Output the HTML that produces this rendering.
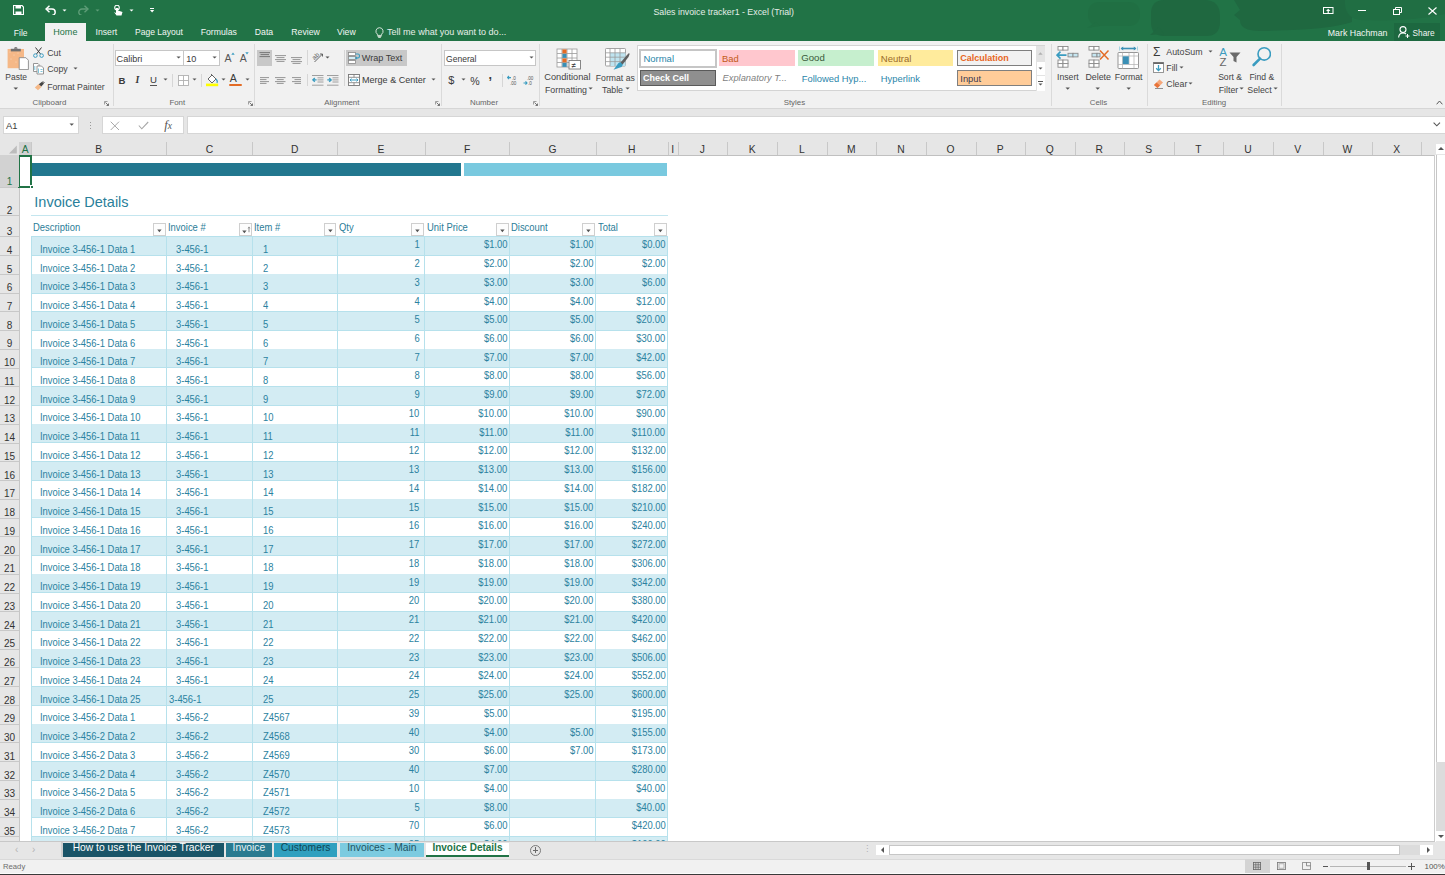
<!DOCTYPE html><html><head><meta charset="utf-8"><style>
*{margin:0;padding:0;box-sizing:border-box}
html,body{width:1445px;height:875px;overflow:hidden;background:#fff;font-family:"Liberation Sans",sans-serif}
.abs{position:absolute}
.t{position:absolute;white-space:nowrap;line-height:1}

</style></head><body>
<div class="abs" style="left:0;top:0;width:1445px;height:41px;background:#217346"></div>
<div class="abs" style="left:0;top:41px;width:1445px;height:67px;background:#f1f1f1"></div>
<div class="abs" style="left:0;top:108px;width:1445px;height:1px;background:#d6d6d6"></div>
<svg class="abs" style="left:1060px;top:0px" width="385" height="41" viewBox="0 0 385 41"><g fill="#1f6b41"><path d="M40 2 H68 Q80 2 80 14 Q80 26 68 26 H40 Q28 26 28 14 Q28 2 40 2Z" fill="#206f43"/><path d="M27 28 L36 22 L40 26Z" fill="#206f43"/><path d="M104 0 H144 Q160 0 160 16 V22 Q160 36 146 36 H104 Q91 36 91 22 V14 Q91 0 104 0Z" fill="#1f6840"/><path d="M90 35 L99 27 L104 34Z" fill="#1f6840"/><path d="M174 0 H292 V22 Q270 30 200 31 Q180 31 180 20 L174 15 L180 10Z" fill="#1f6840"/><path d="M285 0 H385 V14 Q350 22 300 20 Q284 18 285 0Z" fill="#206e43"/></g></svg>
<svg class="abs" style="left:13px;top:5px" width="11" height="10" viewBox="0 0 11 10"><path d="M0.5 0.5 H9 L10.5 2 V9.5 H0.5Z" fill="none" stroke="#fff" stroke-width="1.2"/><rect x="2.5" y="0.5" width="5.5" height="3" fill="#fff"/><rect x="2.5" y="6.5" width="6" height="3" fill="#fff"/></svg>
<svg class="abs" style="left:45px;top:5px" width="12" height="10" viewBox="0 0 12 10"><path d="M2 4 H7 A3.2 3.2 0 0 1 7 10.4" fill="none" stroke="#fff" stroke-width="1.5"/><path d="M4.5 0.8 L1 4 L4.5 7.2" fill="none" stroke="#fff" stroke-width="1.5"/></svg>
<svg class="abs" style="left:61.50px;top:8.50px" width="5.0" height="3.0"><path d="M0.5 0.5 H4.50 L2.50 2.50Z" fill="#fff"/></svg>
<svg class="abs" style="left:78px;top:5px" width="11" height="10" viewBox="0 0 11 10"><path d="M9 4 H4 A3.2 3.2 0 0 0 4 10.4" fill="none" stroke="#5f9d78" stroke-width="1.4"/><path d="M6.5 0.8 L10 4 L6.5 7.2" fill="none" stroke="#5f9d78" stroke-width="1.4"/></svg>
<svg class="abs" style="left:95.00px;top:8.50px" width="5.0" height="3.0"><path d="M0.5 0.5 H4.50 L2.50 2.50Z" fill="#5f9d78"/></svg>
<svg class="abs" style="left:113px;top:5px" width="10" height="11" viewBox="0 0 10 11"><circle cx="4" cy="2.6" r="2.3" fill="none" stroke="#fff" stroke-width="1.1"/><path d="M3 3 V8 L1 7 L3.5 10.5 H8.5 L9.5 7 L5 5.5 V3Z" fill="#fff"/></svg>
<svg class="abs" style="left:128.50px;top:8.50px" width="5.0" height="3.0"><path d="M0.5 0.5 H4.50 L2.50 2.50Z" fill="#fff"/></svg>
<div class="abs" style="left:150.40px;top:8.20px;width:3.80px;height:0.90px;background:#fff;"></div>
<svg class="abs" style="left:150.2px;top:10px" width="4.4" height="3" viewBox="0 0 4.4 3"><path d="M0 0 H4.2 L2.1 2.4Z" fill="#fff"/></svg>
<div class="t" style="left:653.5px;top:7.55px;font-size:8.8px;color:#e5eee8;">Sales invoice tracker1 - Excel (Trial)</div>
<svg class="abs" style="left:1323px;top:7px" width="11" height="7" viewBox="0 0 11 7"><rect x="0.5" y="0.5" width="9.5" height="6" fill="none" stroke="#fff" stroke-width="1"/><path d="M3 4 L5.2 1.8 L7.4 4Z M4.6 3.5 H5.8 V6 H4.6Z" fill="#fff"/></svg>
<div class="abs" style="left:1358.40px;top:10.00px;width:8.00px;height:1.00px;background:#fff;"></div>
<svg class="abs" style="left:1393px;top:7px" width="9" height="8" viewBox="0 0 9 8"><rect x="0.5" y="2.5" width="6" height="5" fill="none" stroke="#fff" stroke-width="1"/><path d="M2.5 2.5 V0.5 H8.5 V5.5 H6.5" fill="none" stroke="#fff" stroke-width="1"/></svg>
<svg class="abs" style="left:1427.5px;top:6.5px" width="9" height="8" viewBox="0 0 9 8"><path d="M0.5 0.5 L8.5 7.5 M8.5 0.5 L0.5 7.5" stroke="#fff" stroke-width="1.1"/></svg>
<div class="abs" style="left:45.00px;top:23.30px;width:41.10px;height:18.00px;background:#f1f1f1;"></div>
<div class="t" style="left:13.8px;top:28.50px;font-size:8.5px;color:#f3f6f4;">File</div>
<div class="t" style="left:53.3px;top:28.04px;font-size:9.05px;color:#217346;">Home</div>
<div class="t" style="left:95.5px;top:28.34px;font-size:8.7px;color:#f3f6f4;">Insert</div>
<div class="t" style="left:135.0px;top:28.46px;font-size:8.55px;color:#f3f6f4;">Page Layout</div>
<div class="t" style="left:200.7px;top:28.34px;font-size:8.7px;color:#f3f6f4;">Formulas</div>
<div class="t" style="left:254.8px;top:28.34px;font-size:8.7px;color:#f3f6f4;">Data</div>
<div class="t" style="left:291.3px;top:28.34px;font-size:8.7px;color:#f3f6f4;">Review</div>
<div class="t" style="left:337.0px;top:28.34px;font-size:8.7px;color:#f3f6f4;">View</div>
<svg class="abs" style="left:374.5px;top:27px" width="9" height="11" viewBox="0 0 9 11"><path d="M4.5 0.7 A3.6 3.6 0 0 1 6.6 7.2 V8.4 H2.4 V7.2 A3.6 3.6 0 0 1 4.5 0.7Z" fill="none" stroke="#e8efe9" stroke-width="0.9"/><path d="M2.6 9.5 H6.4 M3.2 10.5 H5.8" stroke="#e8efe9" stroke-width="0.8"/></svg>
<div class="t" style="left:387.0px;top:28.04px;font-size:9.05px;color:#e8efe9;">Tell me what you want to do...</div>
<div class="t" style="left:1327.8px;top:28.55px;font-size:8.8px;color:#f3f6f4;">Mark Hachman</div>
<div class="abs" style="left:1394.40px;top:23.40px;width:45.30px;height:17.60px;background:#1d6840;"></div>
<svg class="abs" style="left:1398px;top:26px" width="12" height="12" viewBox="0 0 12 12"><circle cx="5" cy="3.6" r="3" fill="none" stroke="#fff" stroke-width="1.1"/><path d="M0.6 11.5 Q1 7 5 7 Q7 7 8 8" fill="none" stroke="#fff" stroke-width="1.1"/><path d="M9.5 8 V12 M7.5 10 H11.5" stroke="#fff" stroke-width="1"/></svg>
<div class="t" style="left:1412.5px;top:28.97px;font-size:8.3px;color:#f3f6f4;">Share</div>
<div class="abs" style="left:112.80px;top:44.40px;width:1.00px;height:62.00px;background:#dadada;"></div>
<div class="abs" style="left:253.80px;top:44.40px;width:1.00px;height:62.00px;background:#dadada;"></div>
<div class="abs" style="left:441.40px;top:44.40px;width:1.00px;height:62.00px;background:#dadada;"></div>
<div class="abs" style="left:538.50px;top:44.40px;width:1.00px;height:62.00px;background:#dadada;"></div>
<div class="abs" style="left:1050.80px;top:44.40px;width:1.00px;height:62.00px;background:#dadada;"></div>
<div class="abs" style="left:1147.40px;top:44.40px;width:1.00px;height:62.00px;background:#dadada;"></div>
<div class="abs" style="left:1281.40px;top:44.40px;width:1.00px;height:62.00px;background:#dadada;"></div>
<div class="abs" style="left:172.30px;top:73.70px;width:1.00px;height:13.00px;background:#d6d6d6;"></div>
<div class="abs" style="left:201.40px;top:73.70px;width:1.00px;height:13.00px;background:#d6d6d6;"></div>
<div class="abs" style="left:306.50px;top:50.00px;width:1.00px;height:15.00px;background:#d6d6d6;"></div>
<div class="abs" style="left:306.50px;top:74.00px;width:1.00px;height:12.00px;background:#d6d6d6;"></div>
<div class="abs" style="left:343.60px;top:50.00px;width:1.00px;height:36.00px;background:#d6d6d6;"></div>
<div class="abs" style="left:501.70px;top:73.70px;width:1.00px;height:13.00px;background:#d6d6d6;"></div>
<div class="t" style="left:-50.6px;width:200px;text-align:center;top:98.91px;font-size:7.9px;color:#666;">Clipboard</div>
<div class="t" style="left:77.3px;width:200px;text-align:center;top:98.91px;font-size:7.9px;color:#666;">Font</div>
<div class="t" style="left:241.9px;width:200px;text-align:center;top:98.91px;font-size:7.9px;color:#666;">Alignment</div>
<div class="t" style="left:384.0px;width:200px;text-align:center;top:98.91px;font-size:7.9px;color:#666;">Number</div>
<div class="t" style="left:694.4px;width:200px;text-align:center;top:98.91px;font-size:7.9px;color:#666;">Styles</div>
<div class="t" style="left:998.5px;width:200px;text-align:center;top:98.91px;font-size:7.9px;color:#666;">Cells</div>
<div class="t" style="left:1114.2px;width:200px;text-align:center;top:98.91px;font-size:7.9px;color:#666;">Editing</div>
<svg class="abs" style="left:104.2px;top:100.6px" width="5" height="5" viewBox="0 0 5 5"><path d="M0.5 3.5 V0.5 H3.5" fill="none" stroke="#8a8a8a" stroke-width="0.8"/><path d="M1.5 1.5 L4.5 4.5 M4.5 2.5 V4.5 H2.5" fill="none" stroke="#666" stroke-width="0.9"/></svg>
<svg class="abs" style="left:248px;top:100.6px" width="5" height="5" viewBox="0 0 5 5"><path d="M0.5 3.5 V0.5 H3.5" fill="none" stroke="#8a8a8a" stroke-width="0.8"/><path d="M1.5 1.5 L4.5 4.5 M4.5 2.5 V4.5 H2.5" fill="none" stroke="#666" stroke-width="0.9"/></svg>
<svg class="abs" style="left:434.7px;top:100.6px" width="5" height="5" viewBox="0 0 5 5"><path d="M0.5 3.5 V0.5 H3.5" fill="none" stroke="#8a8a8a" stroke-width="0.8"/><path d="M1.5 1.5 L4.5 4.5 M4.5 2.5 V4.5 H2.5" fill="none" stroke="#666" stroke-width="0.9"/></svg>
<svg class="abs" style="left:532.6px;top:100.6px" width="5" height="5" viewBox="0 0 5 5"><path d="M0.5 3.5 V0.5 H3.5" fill="none" stroke="#8a8a8a" stroke-width="0.8"/><path d="M1.5 1.5 L4.5 4.5 M4.5 2.5 V4.5 H2.5" fill="none" stroke="#666" stroke-width="0.9"/></svg>
<svg class="abs" style="left:1436px;top:100px" width="7" height="5" viewBox="0 0 7 5"><path d="M0.6 4.3 L3.5 1 L6.4 4.3" fill="none" stroke="#555" stroke-width="1"/></svg>
<svg class="abs" style="left:7px;top:45.5px" width="22" height="24" viewBox="0 0 22 24"><rect x="0.6" y="3" width="16.4" height="19.2" fill="#f5b887"/><g fill="#fbe0c8"><circle cx="3" cy="6" r="0.5"/><circle cx="7" cy="9" r="0.5"/><circle cx="11" cy="7" r="0.5"/><circle cx="4" cy="13" r="0.5"/><circle cx="9" cy="16" r="0.5"/><circle cx="13" cy="12" r="0.5"/></g><path d="M3.8 2.8 H13.8 V5.4 H3.8Z" fill="#707070"/><path d="M7 2.8 A1.8 1.8 0 0 1 10.6 2.8" fill="#707070"/><path d="M12.2 11.7 H18.9 L21.4 14.2 V23.6 H12.2Z" fill="#fff" stroke="#8a8a8a" stroke-width="0.9"/></svg>
<div class="t" style="left:-83.8px;width:200px;text-align:center;top:73.00px;font-size:8.5px;color:#444;">Paste</div>
<svg class="abs" style="left:13.20px;top:86.65px" width="5.6" height="3.3"><path d="M0.5 0.5 H5.10 L2.80 2.80Z" fill="#555"/></svg>
<svg class="abs" style="left:33px;top:46.5px" width="11" height="11" viewBox="0 0 11 11"><path d="M2.5 0.5 L7.5 7 M8.5 0.5 L3.5 7" stroke="#3a3a3a" stroke-width="1"/><circle cx="2.4" cy="8.6" r="1.8" fill="none" stroke="#3a9cc0" stroke-width="1"/><circle cx="8.6" cy="8.6" r="1.8" fill="none" stroke="#3a9cc0" stroke-width="1"/></svg>
<div class="t" style="left:47.2px;top:49.15px;font-size:8.8px;color:#444;">Cut</div>
<svg class="abs" style="left:33px;top:63px" width="11" height="11.5" viewBox="0 0 11 11.5"><path d="M0.5 0.5 H5 L6 1.5 V8.5 H0.5Z" fill="#fff" stroke="#8a8a8a" stroke-width="0.9"/><path d="M4 3 H8.5 L10.5 5 V11 H4Z" fill="#fff" stroke="#8a8a8a" stroke-width="0.9"/><path d="M1.8 3 V7 M5.5 5.5 V10 M7.5 6.5 H9.5 M7.5 8.5 H9.5" stroke="#6fbfd8" stroke-width="0.9"/></svg>
<div class="t" style="left:47.2px;top:64.55px;font-size:8.8px;color:#444;">Copy</div>
<svg class="abs" style="left:73.10px;top:66.90px" width="5.0" height="3.0"><path d="M0.5 0.5 H4.50 L2.50 2.50Z" fill="#555"/></svg>
<svg class="abs" style="left:34px;top:81px" width="11" height="10" viewBox="0 0 11 10"><path d="M0.8 6.5 L4.5 3 L7.5 6 L4 9.3Z" fill="#f5b887"/><path d="M4.8 3.3 L8 0.8 L10 2.5 L7.3 5.6Z" fill="#444"/><path d="M8.8 0.3 L10.5 2" stroke="#444" stroke-width="1"/></svg>
<div class="t" style="left:47.2px;top:82.84px;font-size:8.7px;color:#444;">Format Painter</div>
<div class="abs" style="left:115.00px;top:50.40px;width:68.50px;height:16.10px;background:#fff;border:1px solid #c6c6c6"></div>
<div class="abs" style="left:183.50px;top:50.40px;width:36.00px;height:16.10px;background:#fff;border:1px solid #c6c6c6;border-left:none"></div>
<div class="t" style="left:116.6px;top:55.00px;font-size:9.1px;color:#3a3a3a;">Calibri</div>
<svg class="abs" style="left:175.90px;top:56.45px" width="5.2" height="3.1"><path d="M0.5 0.5 H4.70 L2.60 2.60Z" fill="#555"/></svg>
<div class="t" style="left:186.3px;top:55.00px;font-size:9.1px;color:#3a3a3a;">10</div>
<svg class="abs" style="left:212.20px;top:56.45px" width="5.2" height="3.1"><path d="M0.5 0.5 H4.70 L2.60 2.60Z" fill="#555"/></svg>
<div class="t" style="left:224.6px;top:53.11px;font-size:10.5px;color:#555;">A</div>
<svg class="abs" style="left:230.5px;top:51.5px" width="4" height="3" viewBox="0 0 4 3"><path d="M0.3 2.7 L2 0.5 L3.7 2.7Z" fill="#3a9cc0"/></svg>
<div class="t" style="left:239.8px;top:53.11px;font-size:10.5px;color:#555;">A</div>
<svg class="abs" style="left:245.2px;top:51.5px" width="4" height="3" viewBox="0 0 4 3"><path d="M0.3 0.3 L2 2.5 L3.7 0.3Z" fill="#3a9cc0"/></svg>
<div class="t" style="left:118.6px;top:75.57px;font-size:9.6px;color:#3a3a3a;font-weight:bold">B</div>
<div class="t" style="left:135.6px;top:75.40px;font-size:9.8px;color:#3a3a3a;font-family:'Liberation Serif',serif;font-style:italic;font-weight:bold">I</div>
<div class="t" style="left:150.0px;top:75.37px;font-size:9.6px;color:#3a3a3a;">U</div>
<div class="abs" style="left:150.00px;top:85.00px;width:7.20px;height:0.90px;background:#555;"></div>
<svg class="abs" style="left:163.00px;top:78.10px" width="5.0" height="3.0"><path d="M0.5 0.5 H4.50 L2.50 2.50Z" fill="#555"/></svg>
<svg class="abs" style="left:177.5px;top:74.8px" width="11" height="11" viewBox="0 0 11 11"><rect x="0.5" y="0.5" width="10" height="10" fill="#fff" stroke="#b0b0b0" stroke-width="0.9"/><path d="M5.5 0.5 V10.5 M0.5 5.5 H10.5" stroke="#b0b0b0" stroke-width="0.9"/></svg>
<svg class="abs" style="left:192.10px;top:78.10px" width="5.0" height="3.0"><path d="M0.5 0.5 H4.50 L2.50 2.50Z" fill="#555"/></svg>
<svg class="abs" style="left:206px;top:73px" width="13" height="14" viewBox="0 0 13 14"><path d="M2 6 L6 2 L10 6 L6 10Z" fill="#fff" stroke="#555" stroke-width="0.9"/><path d="M5 1 L6.5 2.5" stroke="#555" stroke-width="0.9"/><path d="M10 6 Q12 8 11 10" fill="none" stroke="#3a9cc0" stroke-width="1.2"/><rect x="0" y="10.6" width="12.2" height="2.6" fill="#ffff00"/></svg>
<svg class="abs" style="left:221.20px;top:78.10px" width="5.0" height="3.0"><path d="M0.5 0.5 H4.50 L2.50 2.50Z" fill="#555"/></svg>
<div class="t" style="left:229.8px;top:73.43px;font-size:10.6px;color:#3a3a3a;">A</div>
<div class="abs" style="left:229.40px;top:83.60px;width:12.40px;height:2.70px;background:#e36c26;border-radius:1px"></div>
<svg class="abs" style="left:244.50px;top:78.10px" width="5.0" height="3.0"><path d="M0.5 0.5 H4.50 L2.50 2.50Z" fill="#555"/></svg>
<div class="abs" style="left:256.80px;top:49.90px;width:15.60px;height:16.10px;background:#c8c8c8;"></div>
<svg class="abs" style="left:259px;top:52px" width="12" height="6" viewBox="0 0 12 6"><path d="M0.5 0.6 H11 M1.5 2.6 H10 M0.5 4.6 H11" stroke="#6d6d6d" stroke-width="0.9"/></svg>
<svg class="abs" style="left:275px;top:54.5px" width="11" height="7" viewBox="0 0 11 7"><path d="M0 0.6 H11 M1.5 2.6 H9.5 M0 4.6 H11 M1.5 6.4 H9.5" stroke="#8a8a8a" stroke-width="0.9"/></svg>
<svg class="abs" style="left:290.5px;top:57px" width="11" height="7" viewBox="0 0 11 7"><path d="M0 0.6 H11 M1.5 2.6 H9.5 M0 4.6 H11 M1.5 6.4 H9.5" stroke="#8a8a8a" stroke-width="0.9"/></svg>
<svg class="abs" style="left:311px;top:49.5px" width="13" height="13" viewBox="0 0 13 13"><text x="1" y="8" font-size="6.5" fill="#555" font-family="Liberation Sans" transform="rotate(-45 5 6)">ab</text><path d="M3.5 12 L11.5 4 M9 4 H11.5 V6.5" fill="none" stroke="#555" stroke-width="0.9"/></svg>
<svg class="abs" style="left:325.10px;top:56.00px" width="5.0" height="3.0"><path d="M0.5 0.5 H4.50 L2.50 2.50Z" fill="#555"/></svg>
<div class="abs" style="left:346.00px;top:49.90px;width:60.50px;height:16.10px;background:#c8c8c8;"></div>
<svg class="abs" style="left:348.4px;top:51.5px" width="12" height="12" viewBox="0 0 12 12"><rect x="0.5" y="0.5" width="7" height="3" fill="#fff" stroke="#8a8a8a" stroke-width="0.8"/><rect x="0.5" y="4.5" width="7" height="3" fill="#d5eef6" stroke="#8a8a8a" stroke-width="0.8"/><rect x="0.5" y="8.5" width="7" height="3" fill="#fff" stroke="#8a8a8a" stroke-width="0.8"/><path d="M7.5 2 H10 Q11.5 2 11.5 4 Q11.5 6 10 6 H8 M9 4.8 L7.8 6 L9 7.2" fill="none" stroke="#3a9cc0" stroke-width="1.1"/></svg>
<div class="t" style="left:361.8px;top:54.00px;font-size:9.1px;color:#3a3a3a;">Wrap Text</div>
<svg class="abs" style="left:260px;top:76.8px" width="10" height="7" viewBox="0 0 10 7"><path d="M0 0.6 H9 M0 2.6 H6.5 M0 4.6 H9 M0 6.4 H6.5" stroke="#8a8a8a" stroke-width="0.9"/></svg>
<svg class="abs" style="left:275.3px;top:76.8px" width="11" height="7" viewBox="0 0 11 7"><path d="M0 0.6 H10.5 M1.8 2.6 H8.7 M0 4.6 H10.5 M1.8 6.4 H8.7" stroke="#8a8a8a" stroke-width="0.9"/></svg>
<svg class="abs" style="left:291.5px;top:76.8px" width="10" height="7" viewBox="0 0 10 7"><path d="M0 0.6 H9 M2.5 2.6 H9 M0 4.6 H9 M2.5 6.4 H9" stroke="#8a8a8a" stroke-width="0.9"/></svg>
<svg class="abs" style="left:311.5px;top:74.8px" width="12" height="11" viewBox="0 0 12 11"><path d="M0 0.5 H11.5 M5.5 2.8 H11.5 M5.5 4.9 H11.5 M5.5 7 H11.5 M0 10.2 H11.5" stroke="#8a8a8a" stroke-width="0.8"/><path d="M0.8 4.9 H4.6 M2.8 3 L0.8 4.9 L2.8 6.8" fill="none" stroke="#3a9cc0" stroke-width="1.3"/></svg>
<svg class="abs" style="left:327.3px;top:74.8px" width="12" height="11" viewBox="0 0 12 11"><path d="M0 0.5 H11.5 M5.5 2.8 H11.5 M5.5 4.9 H11.5 M5.5 7 H11.5 M0 10.2 H11.5" stroke="#8a8a8a" stroke-width="0.8"/><path d="M0.3 4.9 H4.2 M2.2 3 L4.2 4.9 L2.2 6.8" fill="none" stroke="#3a9cc0" stroke-width="1.3"/></svg>
<svg class="abs" style="left:348px;top:74px" width="12" height="12" viewBox="0 0 12 12"><rect x="0.5" y="0.5" width="11" height="11" fill="#fff" stroke="#777" stroke-width="0.9"/><path d="M0.5 3.3 H11.5 M0.5 8.7 H11.5 M6 0.5 V3.3 M6 8.7 V11.5" stroke="#777" stroke-width="0.8"/><path d="M2 6 H10 M3.5 4.6 L2 6 L3.5 7.4 M8.5 4.6 L10 6 L8.5 7.4" fill="none" stroke="#3a9cc0" stroke-width="1"/></svg>
<div class="t" style="left:362.0px;top:76.04px;font-size:9.05px;color:#3a3a3a;">Merge &amp; Center</div>
<svg class="abs" style="left:431.30px;top:77.90px" width="5.0" height="3.0"><path d="M0.5 0.5 H4.50 L2.50 2.50Z" fill="#555"/></svg>
<div class="abs" style="left:444.20px;top:50.20px;width:91.80px;height:16.00px;background:#fff;border:1px solid #c6c6c6"></div>
<div class="t" style="left:446.0px;top:54.56px;font-size:8.55px;color:#3a3a3a;">General</div>
<svg class="abs" style="left:528.70px;top:56.30px" width="5.0" height="3.0"><path d="M0.5 0.5 H4.50 L2.50 2.50Z" fill="#555"/></svg>
<div class="t" style="left:448.2px;top:75.29px;font-size:11px;color:#3a3a3a;">$</div>
<svg class="abs" style="left:460.90px;top:78.10px" width="5.0" height="3.0"><path d="M0.5 0.5 H4.50 L2.50 2.50Z" fill="#555"/></svg>
<div class="t" style="left:470.3px;top:75.63px;font-size:10.6px;color:#3a3a3a;">%</div>
<div class="t" style="left:488.6px;top:69.02px;font-size:12.5px;color:#3a3a3a;font-weight:bold">,</div>
<svg class="abs" style="left:507px;top:75px" width="11" height="11" viewBox="0 0 11 11"><path d="M0.5 2.6 H4 M2 1 L0.5 2.6 L2 4.2" fill="none" stroke="#3a9cc0" stroke-width="1.1"/><text x="5" y="4.6" font-size="4.6" fill="#555" font-family="Liberation Sans">.0</text><text x="3" y="10" font-size="4.6" fill="#555" font-family="Liberation Sans">.00</text></svg>
<svg class="abs" style="left:522.5px;top:75px" width="11" height="11" viewBox="0 0 11 11"><text x="4" y="4.6" font-size="4.6" fill="#555" font-family="Liberation Sans">.00</text><path d="M0.5 8 H4 M2.5 6.4 L4 8 L2.5 9.6" fill="none" stroke="#3a9cc0" stroke-width="1.1"/><text x="5" y="10" font-size="4.6" fill="#555" font-family="Liberation Sans">.0</text></svg>
<svg class="abs" style="left:556px;top:48px" width="26" height="22" viewBox="0 0 26 22"><g stroke="#9a9a9a" stroke-width="0.8" fill="#fff"><rect x="1" y="1" width="20" height="18"/></g><path d="M6 1 V19 M11 1 V19 M16 1 V19 M1 5.5 H21 M1 10 H21 M1 14.5 H21" stroke="#9a9a9a" stroke-width="0.8"/><rect x="6.4" y="1.4" width="4.2" height="4" fill="#e36c26"/><rect x="6.4" y="5.9" width="4.2" height="4" fill="#3a8fb5"/><rect x="6.4" y="10.4" width="4.2" height="4" fill="#e36c26"/><rect x="6.4" y="14.9" width="4.2" height="4" fill="#3a8fb5"/><rect x="13" y="12.5" width="11.5" height="8.5" fill="#fff" stroke="#7a7a7a" stroke-width="0.9"/><text x="15.6" y="19.6" font-size="8" fill="#333" font-family="Liberation Sans">&#8800;</text></svg>
<div class="t" style="left:467.4px;width:200px;text-align:center;top:73.47px;font-size:9.25px;color:#444;">Conditional</div>
<div class="t" style="left:466.0px;width:200px;text-align:center;top:85.65px;font-size:8.8px;color:#444;">Formatting</div>
<svg class="abs" style="left:587.90px;top:86.85px" width="5.2" height="3.1"><path d="M0.5 0.5 H4.70 L2.60 2.60Z" fill="#555"/></svg>
<svg class="abs" style="left:604px;top:47px" width="26" height="24" viewBox="0 0 26 24"><rect x="1.5" y="1.5" width="20" height="17.5" rx="0.8" fill="#fff" stroke="#9a9a9a" stroke-width="0.9"/><rect x="6" y="5.8" width="15.5" height="13.2" fill="#bfe4f0"/><path d="M6 1.5 V19 M11 1.5 V19 M16 1.5 V19 M1.5 5.8 H21.5 M1.5 10.2 H21.5 M1.5 14.6 H21.5" stroke="#9a9a9a" stroke-width="0.8"/><path d="M9.5 22.8 L14.5 16 Q17 14.5 18.5 16 Q19.5 18 17.5 20 Z" fill="#3a9cc0"/><path d="M16.6 15.6 L23 8 L25 6 L25.6 7 L24.5 10 L18.6 17.6Z" fill="#606060"/></svg>
<div class="t" style="left:515.3px;width:200px;text-align:center;top:73.97px;font-size:8.66px;color:#444;">Format as</div>
<div class="t" style="left:512.5px;width:200px;text-align:center;top:85.65px;font-size:8.8px;color:#444;">Table</div>
<svg class="abs" style="left:624.90px;top:86.85px" width="5.2" height="3.1"><path d="M0.5 0.5 H4.70 L2.60 2.60Z" fill="#555"/></svg>
<div class="abs" style="left:637.30px;top:45.30px;width:408.00px;height:46.20px;background:#fff;border:1px solid #d4d4d4"></div>
<div class="abs" style="left:639.10px;top:48.80px;width:78.00px;height:18.90px;background:#fff;border:2px solid #c6c6c6"></div>
<div class="t" style="left:643.4px;top:53.56px;font-size:9.5px;color:#2a86aa;">Normal</div>
<div class="abs" style="left:719.00px;top:49.90px;width:75.70px;height:16.30px;background:#ffc7ce;"></div>
<div class="t" style="left:722.1px;top:53.64px;font-size:9.4px;color:#c25a16;">Bad</div>
<div class="abs" style="left:798.20px;top:49.90px;width:75.60px;height:16.30px;background:#c6efce;"></div>
<div class="t" style="left:801.3px;top:53.47px;font-size:9.6px;color:#3a5a3a;">Good</div>
<div class="abs" style="left:877.80px;top:49.90px;width:75.20px;height:16.30px;background:#ffeb9c;"></div>
<div class="t" style="left:880.8px;top:53.56px;font-size:9.5px;color:#9a6a2a;">Neutral</div>
<div class="abs" style="left:956.90px;top:49.90px;width:75.20px;height:16.30px;background:#f2f2f2;border:1.2px solid #7f7f7f"></div>
<div class="t" style="left:960.3px;top:53.98px;font-size:9.0px;color:#e8661c;font-weight:bold">Calculation</div>
<div class="abs" style="left:639.90px;top:70.10px;width:75.70px;height:15.60px;background:#8f8f8f;border:1.6px solid #5a5a5a"></div>
<div class="t" style="left:643.0px;top:73.98px;font-size:9.0px;color:#ffffff;font-weight:bold">Check Cell</div>
<div class="t" style="left:722.6px;top:73.73px;font-size:9.3px;color:#7f7f7f;font-style:italic">Explanatory T...</div>
<div class="t" style="left:801.7px;top:73.64px;font-size:9.4px;color:#2a86aa;">Followed Hyp...</div>
<div class="t" style="left:880.8px;top:73.64px;font-size:9.4px;color:#2a86aa;">Hyperlink</div>
<div class="abs" style="left:956.90px;top:70.10px;width:75.20px;height:15.60px;background:#ffcc99;border:1.2px solid #7f7f7f"></div>
<div class="t" style="left:960.3px;top:73.64px;font-size:9.4px;color:#3a3a50;">Input</div>
<div class="abs" style="left:1035.60px;top:45.80px;width:9.60px;height:15.50px;background:#e3e3e3;"></div>
<svg class="abs" style="left:1038px;top:52px" width="5" height="3" viewBox="0 0 5 3"><path d="M0.3 2.7 L2.5 0.3 L4.7 2.7Z" fill="#b0b0b0"/></svg>
<div class="abs" style="left:1035.60px;top:61.30px;width:9.60px;height:14.00px;background:#fff;border-top:1px solid #e3e3e3;border-left:1px solid #e3e3e3"></div>
<svg class="abs" style="left:1037.90px;top:67.00px" width="5.0" height="3.0"><path d="M0.5 0.5 H4.50 L2.50 2.50Z" fill="#555"/></svg>
<div class="abs" style="left:1035.60px;top:75.30px;width:9.60px;height:15.70px;background:#fff;border-top:1px solid #e3e3e3;border-left:1px solid #e3e3e3"></div>
<div class="abs" style="left:1038.20px;top:81.20px;width:4.40px;height:0.80px;background:#555;"></div>
<svg class="abs" style="left:1037.90px;top:82.50px" width="5.0" height="3.0"><path d="M0.5 0.5 H4.50 L2.50 2.50Z" fill="#555"/></svg>
<svg class="abs" style="left:1056px;top:46px" width="24" height="22" viewBox="0 0 24 22"><g fill="#fff" stroke="#8a8a8a" stroke-width="0.9"><rect x="2" y="0.5" width="5" height="3.6"/><rect x="7" y="0.5" width="5" height="3.6"/><rect x="2" y="14" width="5" height="3.6"/><rect x="7" y="14" width="5" height="3.6"/><rect x="2" y="17.6" width="5" height="3.6"/><rect x="7" y="17.6" width="5" height="3.6"/></g><g fill="#c5e6f1" stroke="#8a8a8a" stroke-width="0.9"><rect x="12" y="7.3" width="5" height="3.6"/><rect x="17" y="7.3" width="5" height="3.6"/></g><path d="M1 9.1 H10.5 M4.5 5.6 L1 9.1 L4.5 12.6" fill="none" stroke="#3a9cc0" stroke-width="1.6"/></svg>
<div class="t" style="left:967.9px;width:200px;text-align:center;top:72.64px;font-size:8.7px;color:#444;">Insert</div>
<svg class="abs" style="left:1065.00px;top:86.80px" width="5.4" height="3.2"><path d="M0.5 0.5 H4.90 L2.70 2.70Z" fill="#555"/></svg>
<svg class="abs" style="left:1087px;top:46px" width="24" height="22" viewBox="0 0 24 22"><g fill="#fff" stroke="#8a8a8a" stroke-width="0.9"><rect x="2" y="0.5" width="5" height="3.6"/><rect x="7" y="0.5" width="5" height="3.6"/><rect x="2" y="14" width="5" height="3.6"/><rect x="7" y="14" width="5" height="3.6"/><rect x="2" y="17.6" width="5" height="3.6"/><rect x="7" y="17.6" width="5" height="3.6"/></g><g fill="#c5e6f1" stroke="#8a8a8a" stroke-width="0.9"><rect x="5" y="7.3" width="5" height="3.6"/><rect x="10" y="7.3" width="3" height="3.6"/></g><path d="M13 4.5 L21.5 13.5 M21.5 4.5 L13 13.5" stroke="#e36c26" stroke-width="1.5"/></svg>
<div class="t" style="left:998.2px;width:200px;text-align:center;top:72.50px;font-size:8.86px;color:#444;">Delete</div>
<svg class="abs" style="left:1095.30px;top:86.80px" width="5.4" height="3.2"><path d="M0.5 0.5 H4.90 L2.70 2.70Z" fill="#555"/></svg>
<svg class="abs" style="left:1117px;top:46px" width="24" height="24" viewBox="0 0 24 24"><path d="M2.5 0.5 V4.5 M20.5 0.5 V4.5" stroke="#9ccfe0" stroke-width="0.9"/><path d="M4.5 2.5 H18.5" stroke="#3a8fb5" stroke-width="1.6"/><path d="M3.6 2.5 L6.2 0.4 V4.6Z M19.4 2.5 L16.8 0.4 V4.6Z" fill="#3a8fb5"/><rect x="1" y="6.5" width="20.5" height="16" rx="0.8" fill="#fff" stroke="#8a8a8a" stroke-width="0.9"/><path d="M1 10 H21.5 M1 18.5 H21.5 M5.5 6.5 V22.5 M12 6.5 V18.5 M17 6.5 V22.5" stroke="#b0b0b0" stroke-width="0.7"/><rect x="5.8" y="10.3" width="6" height="7.8" fill="#3a8fb5"/></svg>
<div class="t" style="left:1028.7px;width:200px;text-align:center;top:72.57px;font-size:8.78px;color:#444;">Format</div>
<svg class="abs" style="left:1126.30px;top:86.80px" width="5.4" height="3.2"><path d="M0.5 0.5 H4.90 L2.70 2.70Z" fill="#555"/></svg>
<div class="t" style="left:1153.0px;top:46.04px;font-size:12px;color:#3a3a3a;">&#931;</div>
<div class="t" style="left:1166.3px;top:47.55px;font-size:8.8px;color:#444;">AutoSum</div>
<svg class="abs" style="left:1208.20px;top:49.90px" width="5.0" height="3.0"><path d="M0.5 0.5 H4.50 L2.50 2.50Z" fill="#555"/></svg>
<svg class="abs" style="left:1152.5px;top:62px" width="11" height="11" viewBox="0 0 11 11"><rect x="0.5" y="0.5" width="10" height="10" fill="#fff" stroke="#8a8a8a" stroke-width="0.9"/><path d="M0.5 1.2 H10.5" stroke="#555" stroke-width="1.4"/><path d="M5.5 3 V8.5 M3.2 6.3 L5.5 8.6 L7.8 6.3" fill="none" stroke="#3a9cc0" stroke-width="1.3"/></svg>
<div class="t" style="left:1166.3px;top:63.65px;font-size:8.8px;color:#444;">Fill</div>
<svg class="abs" style="left:1179.00px;top:65.90px" width="5.0" height="3.0"><path d="M0.5 0.5 H4.50 L2.50 2.50Z" fill="#555"/></svg>
<svg class="abs" style="left:1153px;top:78px" width="11" height="11" viewBox="0 0 11 11"><path d="M1 7 L6.5 1.5 L10 4.5 L4.5 10Z" fill="#f5a77a"/><path d="M1 7 L3.5 4.5 L7 7.5 L4.5 10Z" fill="#e8743a"/><path d="M2 10.5 H10" stroke="#777" stroke-width="0.8"/></svg>
<div class="t" style="left:1166.3px;top:79.85px;font-size:8.8px;color:#444;">Clear</div>
<svg class="abs" style="left:1187.90px;top:82.10px" width="5.0" height="3.0"><path d="M0.5 0.5 H4.50 L2.50 2.50Z" fill="#555"/></svg>
<div class="t" style="left:1219.2px;top:45.78px;font-size:11.6px;color:#3a9cc0;">A</div>
<div class="t" style="left:1219.6px;top:56.55px;font-size:11.4px;color:#666;">Z</div>
<svg class="abs" style="left:1229px;top:52px" width="12" height="11" viewBox="0 0 12 11"><path d="M0.5 0.5 H11.5 L7.5 5 V10.5 L4.5 9 V5Z" fill="#6a6a6a"/></svg>
<div class="t" style="left:1130.1px;width:200px;text-align:center;top:72.72px;font-size:8.6px;color:#444;">Sort &amp;</div>
<div class="t" style="left:1128.5px;width:200px;text-align:center;top:85.55px;font-size:8.8px;color:#444;">Filter</div>
<svg class="abs" style="left:1239.00px;top:86.85px" width="5.2" height="3.1"><path d="M0.5 0.5 H4.70 L2.60 2.60Z" fill="#555"/></svg>
<svg class="abs" style="left:1251px;top:46px" width="20" height="22" viewBox="0 0 20 22"><circle cx="13.2" cy="7.9" r="6.2" fill="none" stroke="#3a9cc0" stroke-width="1.6"/><path d="M9 12.6 L2.6 19" stroke="#3a9cc0" stroke-width="2.6" stroke-linecap="round"/></svg>
<div class="t" style="left:1161.8px;width:200px;text-align:center;top:72.72px;font-size:8.6px;color:#444;">Find &amp;</div>
<div class="t" style="left:1159.5px;width:200px;text-align:center;top:85.55px;font-size:8.8px;color:#444;">Select</div>
<svg class="abs" style="left:1272.60px;top:86.85px" width="5.2" height="3.1"><path d="M0.5 0.5 H4.70 L2.60 2.60Z" fill="#555"/></svg>
<div class="abs" style="left:0;top:109px;width:1445px;height:46px;background:#e6e6e6"></div>
<div class="abs" style="left:2.60px;top:116.20px;width:76.00px;height:17.90px;background:#fff;border:1px solid #d6d6d6"></div>
<div class="t" style="left:6.0px;top:121.44px;font-size:9.4px;color:#3a3a3a;">A1</div>
<svg class="abs" style="left:68.90px;top:123.20px" width="5.4" height="3.2"><path d="M0.5 0.5 H4.90 L2.70 2.70Z" fill="#555"/></svg>
<div class="abs" style="left:89.60px;top:121.60px;width:1.30px;height:1.30px;background:#9a9a9a;"></div>
<div class="abs" style="left:89.60px;top:124.60px;width:1.30px;height:1.30px;background:#9a9a9a;"></div>
<div class="abs" style="left:89.60px;top:127.60px;width:1.30px;height:1.30px;background:#9a9a9a;"></div>
<div class="abs" style="left:101.50px;top:116.20px;width:82.00px;height:17.80px;background:#fff;border:1px solid #d6d6d6"></div>
<svg class="abs" style="left:110px;top:120.5px" width="10" height="10" viewBox="0 0 10 10"><path d="M0.7 0.7 L9 9 M9 0.7 L0.7 9" stroke="#a8a8a8" stroke-width="1"/></svg>
<svg class="abs" style="left:137.5px;top:121px" width="11" height="9" viewBox="0 0 11 9"><path d="M0.8 4.5 L3.8 7.8 L10.2 1" fill="none" stroke="#a8a8a8" stroke-width="1.1"/></svg>
<div class="t" style="left:164.2px;top:119.02px;font-size:12.5px;color:#555;font-family:'Liberation Serif',serif;font-style:italic">f<span style="font-size:9.5px">x</span></div>
<div class="abs" style="left:186.50px;top:116.20px;width:1260.00px;height:17.80px;background:#fff;border:1px solid #d6d6d6;border-right:none"></div>
<svg class="abs" style="left:1433px;top:122px" width="8" height="5" viewBox="0 0 8 5"><path d="M0.6 0.6 L3.8 3.8 L7 0.6" fill="none" stroke="#555" stroke-width="1.1"/></svg>
<div class="abs" style="left:0;top:155px;width:1434px;height:1px;background:#c0c0c0"></div>
<div class="abs" style="left:0;top:155px;width:19px;height:686px;background:#e6e6e6"></div>
<div class="abs" style="left:19px;top:155px;width:1px;height:686px;background:#c6c6c6"></div>
<div class="abs" style="left:31.2px;top:142px;width:1px;height:13px;background:#c8c8c8"></div>
<div class="t" style="left:19.4px;width:11.8px;top:144.6px;text-align:center;font-size:10.3px;color:#333">A</div>
<div class="abs" style="left:166.4px;top:142px;width:1px;height:13px;background:#c8c8c8"></div>
<div class="t" style="left:31.2px;width:135.2px;top:144.6px;text-align:center;font-size:10.3px;color:#333">B</div>
<div class="abs" style="left:252.4px;top:142px;width:1px;height:13px;background:#c8c8c8"></div>
<div class="t" style="left:166.4px;width:86.0px;top:144.6px;text-align:center;font-size:10.3px;color:#333">C</div>
<div class="abs" style="left:337.0px;top:142px;width:1px;height:13px;background:#c8c8c8"></div>
<div class="t" style="left:252.4px;width:84.6px;top:144.6px;text-align:center;font-size:10.3px;color:#333">D</div>
<div class="abs" style="left:424.7px;top:142px;width:1px;height:13px;background:#c8c8c8"></div>
<div class="t" style="left:337.0px;width:87.7px;top:144.6px;text-align:center;font-size:10.3px;color:#333">E</div>
<div class="abs" style="left:509.4px;top:142px;width:1px;height:13px;background:#c8c8c8"></div>
<div class="t" style="left:424.7px;width:84.7px;top:144.6px;text-align:center;font-size:10.3px;color:#333">F</div>
<div class="abs" style="left:595.6px;top:142px;width:1px;height:13px;background:#c8c8c8"></div>
<div class="t" style="left:509.4px;width:86.2px;top:144.6px;text-align:center;font-size:10.3px;color:#333">G</div>
<div class="abs" style="left:667.6px;top:142px;width:1px;height:13px;background:#c8c8c8"></div>
<div class="t" style="left:595.6px;width:72.0px;top:144.6px;text-align:center;font-size:10.3px;color:#333">H</div>
<div class="abs" style="left:677.6px;top:142px;width:1px;height:13px;background:#c8c8c8"></div>
<div class="t" style="left:667.6px;width:10.0px;top:144.6px;text-align:center;font-size:10.3px;color:#333">I</div>
<div class="abs" style="left:727.2px;top:142px;width:1px;height:13px;background:#c8c8c8"></div>
<div class="t" style="left:677.6px;width:49.6px;top:144.6px;text-align:center;font-size:10.3px;color:#333">J</div>
<div class="abs" style="left:777.2px;top:142px;width:1px;height:13px;background:#c8c8c8"></div>
<div class="t" style="left:727.2px;width:50.0px;top:144.6px;text-align:center;font-size:10.3px;color:#333">K</div>
<div class="abs" style="left:826.5px;top:142px;width:1px;height:13px;background:#c8c8c8"></div>
<div class="t" style="left:777.2px;width:49.3px;top:144.6px;text-align:center;font-size:10.3px;color:#333">L</div>
<div class="abs" style="left:876.2px;top:142px;width:1px;height:13px;background:#c8c8c8"></div>
<div class="t" style="left:826.5px;width:49.7px;top:144.6px;text-align:center;font-size:10.3px;color:#333">M</div>
<div class="abs" style="left:925.6px;top:142px;width:1px;height:13px;background:#c8c8c8"></div>
<div class="t" style="left:876.2px;width:49.4px;top:144.6px;text-align:center;font-size:10.3px;color:#333">N</div>
<div class="abs" style="left:975.5px;top:142px;width:1px;height:13px;background:#c8c8c8"></div>
<div class="t" style="left:925.6px;width:49.9px;top:144.6px;text-align:center;font-size:10.3px;color:#333">O</div>
<div class="abs" style="left:1024.9px;top:142px;width:1px;height:13px;background:#c8c8c8"></div>
<div class="t" style="left:975.5px;width:49.4px;top:144.6px;text-align:center;font-size:10.3px;color:#333">P</div>
<div class="abs" style="left:1074.6px;top:142px;width:1px;height:13px;background:#c8c8c8"></div>
<div class="t" style="left:1024.9px;width:49.7px;top:144.6px;text-align:center;font-size:10.3px;color:#333">Q</div>
<div class="abs" style="left:1123.8px;top:142px;width:1px;height:13px;background:#c8c8c8"></div>
<div class="t" style="left:1074.6px;width:49.2px;top:144.6px;text-align:center;font-size:10.3px;color:#333">R</div>
<div class="abs" style="left:1173.6px;top:142px;width:1px;height:13px;background:#c8c8c8"></div>
<div class="t" style="left:1123.8px;width:49.8px;top:144.6px;text-align:center;font-size:10.3px;color:#333">S</div>
<div class="abs" style="left:1223.0px;top:142px;width:1px;height:13px;background:#c8c8c8"></div>
<div class="t" style="left:1173.6px;width:49.4px;top:144.6px;text-align:center;font-size:10.3px;color:#333">T</div>
<div class="abs" style="left:1272.8px;top:142px;width:1px;height:13px;background:#c8c8c8"></div>
<div class="t" style="left:1223.0px;width:49.8px;top:144.6px;text-align:center;font-size:10.3px;color:#333">U</div>
<div class="abs" style="left:1322.5px;top:142px;width:1px;height:13px;background:#c8c8c8"></div>
<div class="t" style="left:1272.8px;width:49.7px;top:144.6px;text-align:center;font-size:10.3px;color:#333">V</div>
<div class="abs" style="left:1372.0px;top:142px;width:1px;height:13px;background:#c8c8c8"></div>
<div class="t" style="left:1322.5px;width:49.5px;top:144.6px;text-align:center;font-size:10.3px;color:#333">W</div>
<div class="abs" style="left:1421.2px;top:142px;width:1px;height:13px;background:#c8c8c8"></div>
<div class="t" style="left:1372.0px;width:49.2px;top:144.6px;text-align:center;font-size:10.3px;color:#333">X</div>
<div class="abs" style="left:0;top:186.5px;width:19px;height:1px;background:#c8c8c8"></div>
<div class="t" style="left:0;width:19px;top:177.1px;text-align:center;font-size:10px;color:#333">1</div>
<div class="abs" style="left:0;top:214.9px;width:19px;height:1px;background:#c8c8c8"></div>
<div class="t" style="left:0;width:19px;top:205.5px;text-align:center;font-size:10px;color:#333">2</div>
<div class="abs" style="left:0;top:236.4px;width:19px;height:1px;background:#c8c8c8"></div>
<div class="t" style="left:0;width:19px;top:227.0px;text-align:center;font-size:10px;color:#333">3</div>
<div class="abs" style="left:0;top:255.1px;width:19px;height:1px;background:#c8c8c8"></div>
<div class="t" style="left:0;width:19px;top:245.7px;text-align:center;font-size:10px;color:#333">4</div>
<div class="abs" style="left:0;top:273.9px;width:19px;height:1px;background:#c8c8c8"></div>
<div class="t" style="left:0;width:19px;top:264.5px;text-align:center;font-size:10px;color:#333">5</div>
<div class="abs" style="left:0;top:292.6px;width:19px;height:1px;background:#c8c8c8"></div>
<div class="t" style="left:0;width:19px;top:283.2px;text-align:center;font-size:10px;color:#333">6</div>
<div class="abs" style="left:0;top:311.4px;width:19px;height:1px;background:#c8c8c8"></div>
<div class="t" style="left:0;width:19px;top:302.0px;text-align:center;font-size:10px;color:#333">7</div>
<div class="abs" style="left:0;top:330.1px;width:19px;height:1px;background:#c8c8c8"></div>
<div class="t" style="left:0;width:19px;top:320.7px;text-align:center;font-size:10px;color:#333">8</div>
<div class="abs" style="left:0;top:348.8px;width:19px;height:1px;background:#c8c8c8"></div>
<div class="t" style="left:0;width:19px;top:339.4px;text-align:center;font-size:10px;color:#333">9</div>
<div class="abs" style="left:0;top:367.6px;width:19px;height:1px;background:#c8c8c8"></div>
<div class="t" style="left:0;width:19px;top:358.2px;text-align:center;font-size:10px;color:#333">10</div>
<div class="abs" style="left:0;top:386.3px;width:19px;height:1px;background:#c8c8c8"></div>
<div class="t" style="left:0;width:19px;top:376.9px;text-align:center;font-size:10px;color:#333">11</div>
<div class="abs" style="left:0;top:405.1px;width:19px;height:1px;background:#c8c8c8"></div>
<div class="t" style="left:0;width:19px;top:395.7px;text-align:center;font-size:10px;color:#333">12</div>
<div class="abs" style="left:0;top:423.8px;width:19px;height:1px;background:#c8c8c8"></div>
<div class="t" style="left:0;width:19px;top:414.4px;text-align:center;font-size:10px;color:#333">13</div>
<div class="abs" style="left:0;top:442.5px;width:19px;height:1px;background:#c8c8c8"></div>
<div class="t" style="left:0;width:19px;top:433.1px;text-align:center;font-size:10px;color:#333">14</div>
<div class="abs" style="left:0;top:461.3px;width:19px;height:1px;background:#c8c8c8"></div>
<div class="t" style="left:0;width:19px;top:451.9px;text-align:center;font-size:10px;color:#333">15</div>
<div class="abs" style="left:0;top:480.0px;width:19px;height:1px;background:#c8c8c8"></div>
<div class="t" style="left:0;width:19px;top:470.6px;text-align:center;font-size:10px;color:#333">16</div>
<div class="abs" style="left:0;top:498.8px;width:19px;height:1px;background:#c8c8c8"></div>
<div class="t" style="left:0;width:19px;top:489.4px;text-align:center;font-size:10px;color:#333">17</div>
<div class="abs" style="left:0;top:517.5px;width:19px;height:1px;background:#c8c8c8"></div>
<div class="t" style="left:0;width:19px;top:508.1px;text-align:center;font-size:10px;color:#333">18</div>
<div class="abs" style="left:0;top:536.2px;width:19px;height:1px;background:#c8c8c8"></div>
<div class="t" style="left:0;width:19px;top:526.8px;text-align:center;font-size:10px;color:#333">19</div>
<div class="abs" style="left:0;top:555.0px;width:19px;height:1px;background:#c8c8c8"></div>
<div class="t" style="left:0;width:19px;top:545.6px;text-align:center;font-size:10px;color:#333">20</div>
<div class="abs" style="left:0;top:573.7px;width:19px;height:1px;background:#c8c8c8"></div>
<div class="t" style="left:0;width:19px;top:564.3px;text-align:center;font-size:10px;color:#333">21</div>
<div class="abs" style="left:0;top:592.5px;width:19px;height:1px;background:#c8c8c8"></div>
<div class="t" style="left:0;width:19px;top:583.1px;text-align:center;font-size:10px;color:#333">22</div>
<div class="abs" style="left:0;top:611.2px;width:19px;height:1px;background:#c8c8c8"></div>
<div class="t" style="left:0;width:19px;top:601.8px;text-align:center;font-size:10px;color:#333">23</div>
<div class="abs" style="left:0;top:629.9px;width:19px;height:1px;background:#c8c8c8"></div>
<div class="t" style="left:0;width:19px;top:620.5px;text-align:center;font-size:10px;color:#333">24</div>
<div class="abs" style="left:0;top:648.7px;width:19px;height:1px;background:#c8c8c8"></div>
<div class="t" style="left:0;width:19px;top:639.3px;text-align:center;font-size:10px;color:#333">25</div>
<div class="abs" style="left:0;top:667.4px;width:19px;height:1px;background:#c8c8c8"></div>
<div class="t" style="left:0;width:19px;top:658.0px;text-align:center;font-size:10px;color:#333">26</div>
<div class="abs" style="left:0;top:686.2px;width:19px;height:1px;background:#c8c8c8"></div>
<div class="t" style="left:0;width:19px;top:676.8px;text-align:center;font-size:10px;color:#333">27</div>
<div class="abs" style="left:0;top:704.9px;width:19px;height:1px;background:#c8c8c8"></div>
<div class="t" style="left:0;width:19px;top:695.5px;text-align:center;font-size:10px;color:#333">28</div>
<div class="abs" style="left:0;top:723.6px;width:19px;height:1px;background:#c8c8c8"></div>
<div class="t" style="left:0;width:19px;top:714.2px;text-align:center;font-size:10px;color:#333">29</div>
<div class="abs" style="left:0;top:742.4px;width:19px;height:1px;background:#c8c8c8"></div>
<div class="t" style="left:0;width:19px;top:733.0px;text-align:center;font-size:10px;color:#333">30</div>
<div class="abs" style="left:0;top:761.1px;width:19px;height:1px;background:#c8c8c8"></div>
<div class="t" style="left:0;width:19px;top:751.7px;text-align:center;font-size:10px;color:#333">31</div>
<div class="abs" style="left:0;top:779.9px;width:19px;height:1px;background:#c8c8c8"></div>
<div class="t" style="left:0;width:19px;top:770.5px;text-align:center;font-size:10px;color:#333">32</div>
<div class="abs" style="left:0;top:798.6px;width:19px;height:1px;background:#c8c8c8"></div>
<div class="t" style="left:0;width:19px;top:789.2px;text-align:center;font-size:10px;color:#333">33</div>
<div class="abs" style="left:0;top:817.3px;width:19px;height:1px;background:#c8c8c8"></div>
<div class="t" style="left:0;width:19px;top:807.9px;text-align:center;font-size:10px;color:#333">34</div>
<div class="abs" style="left:0;top:836.1px;width:19px;height:1px;background:#c8c8c8"></div>
<div class="t" style="left:0;width:19px;top:826.7px;text-align:center;font-size:10px;color:#333">35</div>
<div class="abs" style="left:0;top:840.5px;width:19px;height:1px;background:#c8c8c8"></div>
<div class="abs" style="left:0;top:0;width:1434px;height:841px;overflow:hidden">
<div class="abs" style="left:31px;top:163px;width:429.5px;height:12.5px;background:#22778f"></div>
<div class="abs" style="left:463.7px;top:163px;width:203.5px;height:12.5px;background:#79c9df"></div>
<div class="t" style="left:34.3px;top:195px;font-size:14.5px;color:#2a7f9a">Invoice Details</div>
<div class="abs" style="left:31px;top:214.8px;width:636.6px;height:1px;background:#c4e6ef"></div>
<div class="t" style="left:33.2px;top:222.57px;font-size:10.2px;color:#2b7d98;transform:scaleX(0.925);transform-origin:0 0">Description</div>
<div class="abs" style="left:153.1px;top:223.3px;width:12.8px;height:12.8px;border:1px solid #cfcfcf;background:#fdfdfd"></div>
<svg class="abs" style="left:157.1px;top:229.4px" width="5" height="4"><path d="M0.2 0.4 H4.6 L2.4 3.2Z" fill="#555"/></svg>
<div class="t" style="left:168.4px;top:222.57px;font-size:10.2px;color:#2b7d98;transform:scaleX(0.925);transform-origin:0 0">Invoice #</div>
<div class="abs" style="left:239.1px;top:223.3px;width:12.8px;height:12.8px;border:1px solid #cfcfcf;background:#fdfdfd"></div>
<svg class="abs" style="left:241.6px;top:229.6px" width="5" height="4"><path d="M0.2 0.4 H4.6 L2.4 3.2Z" fill="#555"/></svg>
<svg class="abs" style="left:246.6px;top:226px" width="4" height="7"><path d="M2 0.6 L0.6 2.4 H3.4Z M1.6 2 H2.4 V6.2 H1.6Z" fill="#777"/></svg>
<div class="t" style="left:254.4px;top:222.57px;font-size:10.2px;color:#2b7d98;transform:scaleX(0.925);transform-origin:0 0">Item #</div>
<div class="abs" style="left:323.7px;top:223.3px;width:12.8px;height:12.8px;border:1px solid #cfcfcf;background:#fdfdfd"></div>
<svg class="abs" style="left:327.7px;top:229.4px" width="5" height="4"><path d="M0.2 0.4 H4.6 L2.4 3.2Z" fill="#555"/></svg>
<div class="t" style="left:339.0px;top:222.57px;font-size:10.2px;color:#2b7d98;transform:scaleX(0.925);transform-origin:0 0">Qty</div>
<div class="abs" style="left:411.4px;top:223.3px;width:12.8px;height:12.8px;border:1px solid #cfcfcf;background:#fdfdfd"></div>
<svg class="abs" style="left:415.4px;top:229.4px" width="5" height="4"><path d="M0.2 0.4 H4.6 L2.4 3.2Z" fill="#555"/></svg>
<div class="t" style="left:426.7px;top:222.57px;font-size:10.2px;color:#2b7d98;transform:scaleX(0.925);transform-origin:0 0">Unit Price</div>
<div class="abs" style="left:496.1px;top:223.3px;width:12.8px;height:12.8px;border:1px solid #cfcfcf;background:#fdfdfd"></div>
<svg class="abs" style="left:500.1px;top:229.4px" width="5" height="4"><path d="M0.2 0.4 H4.6 L2.4 3.2Z" fill="#555"/></svg>
<div class="t" style="left:511.4px;top:222.57px;font-size:10.2px;color:#2b7d98;transform:scaleX(0.925);transform-origin:0 0">Discount</div>
<div class="abs" style="left:582.3px;top:223.3px;width:12.8px;height:12.8px;border:1px solid #cfcfcf;background:#fdfdfd"></div>
<svg class="abs" style="left:586.3px;top:229.4px" width="5" height="4"><path d="M0.2 0.4 H4.6 L2.4 3.2Z" fill="#555"/></svg>
<div class="t" style="left:597.6px;top:222.57px;font-size:10.2px;color:#2b7d98;transform:scaleX(0.925);transform-origin:0 0">Total</div>
<div class="abs" style="left:654.3px;top:223.3px;width:12.8px;height:12.8px;border:1px solid #cfcfcf;background:#fdfdfd"></div>
<svg class="abs" style="left:658.3px;top:229.4px" width="5" height="4"><path d="M0.2 0.4 H4.6 L2.4 3.2Z" fill="#555"/></svg>
<div class="abs" style="left:31.2px;top:236.90px;width:636.4px;height:18.74px;background:#d3ecf3"></div>
<div class="abs" style="left:31.2px;top:255.04px;width:636.4px;height:1px;background:#b6e1ec"></div>
<div class="t" style="left:40.2px;top:244.81px;font-size:10.2px;color:#2b82a0;transform:scaleX(0.925);transform-origin:0 0">Invoice 3-456-1 Data 1</div>
<div class="t" style="left:176.2px;top:244.81px;font-size:10.2px;color:#2b82a0;transform:scaleX(0.925);transform-origin:0 0">3-456-1</div>
<div class="t" style="left:262.8px;top:244.81px;font-size:10.2px;color:#2b82a0;transform:scaleX(0.925);transform-origin:0 0">1</div>
<div class="t" style="right:1014.7px;top:240.31px;font-size:10.2px;color:#2b82a0;transform:scaleX(0.925);transform-origin:100% 0">1</div>
<div class="t" style="right:926.8px;top:240.31px;font-size:10.2px;color:#2b82a0;transform:scaleX(0.925);transform-origin:100% 0">$1.00</div>
<div class="t" style="right:840.6px;top:240.31px;font-size:10.2px;color:#2b82a0;transform:scaleX(0.925);transform-origin:100% 0">$1.00</div>
<div class="t" style="right:768.6px;top:240.31px;font-size:10.2px;color:#2b82a0;transform:scaleX(0.925);transform-origin:100% 0">$0.00</div>
<div class="abs" style="left:31.2px;top:273.78px;width:636.4px;height:1px;background:#b6e1ec"></div>
<div class="t" style="left:40.2px;top:263.55px;font-size:10.2px;color:#2b82a0;transform:scaleX(0.925);transform-origin:0 0">Invoice 3-456-1 Data 2</div>
<div class="t" style="left:176.2px;top:263.55px;font-size:10.2px;color:#2b82a0;transform:scaleX(0.925);transform-origin:0 0">3-456-1</div>
<div class="t" style="left:262.8px;top:263.55px;font-size:10.2px;color:#2b82a0;transform:scaleX(0.925);transform-origin:0 0">2</div>
<div class="t" style="right:1014.7px;top:259.05px;font-size:10.2px;color:#2b82a0;transform:scaleX(0.925);transform-origin:100% 0">2</div>
<div class="t" style="right:926.8px;top:259.05px;font-size:10.2px;color:#2b82a0;transform:scaleX(0.925);transform-origin:100% 0">$2.00</div>
<div class="t" style="right:840.6px;top:259.05px;font-size:10.2px;color:#2b82a0;transform:scaleX(0.925);transform-origin:100% 0">$2.00</div>
<div class="t" style="right:768.6px;top:259.05px;font-size:10.2px;color:#2b82a0;transform:scaleX(0.925);transform-origin:100% 0">$2.00</div>
<div class="abs" style="left:31.2px;top:274.38px;width:636.4px;height:18.74px;background:#d3ecf3"></div>
<div class="abs" style="left:31.2px;top:292.52px;width:636.4px;height:1px;background:#b6e1ec"></div>
<div class="t" style="left:40.2px;top:282.29px;font-size:10.2px;color:#2b82a0;transform:scaleX(0.925);transform-origin:0 0">Invoice 3-456-1 Data 3</div>
<div class="t" style="left:176.2px;top:282.29px;font-size:10.2px;color:#2b82a0;transform:scaleX(0.925);transform-origin:0 0">3-456-1</div>
<div class="t" style="left:262.8px;top:282.29px;font-size:10.2px;color:#2b82a0;transform:scaleX(0.925);transform-origin:0 0">3</div>
<div class="t" style="right:1014.7px;top:277.79px;font-size:10.2px;color:#2b82a0;transform:scaleX(0.925);transform-origin:100% 0">3</div>
<div class="t" style="right:926.8px;top:277.79px;font-size:10.2px;color:#2b82a0;transform:scaleX(0.925);transform-origin:100% 0">$3.00</div>
<div class="t" style="right:840.6px;top:277.79px;font-size:10.2px;color:#2b82a0;transform:scaleX(0.925);transform-origin:100% 0">$3.00</div>
<div class="t" style="right:768.6px;top:277.79px;font-size:10.2px;color:#2b82a0;transform:scaleX(0.925);transform-origin:100% 0">$6.00</div>
<div class="abs" style="left:31.2px;top:311.26px;width:636.4px;height:1px;background:#b6e1ec"></div>
<div class="t" style="left:40.2px;top:301.03px;font-size:10.2px;color:#2b82a0;transform:scaleX(0.925);transform-origin:0 0">Invoice 3-456-1 Data 4</div>
<div class="t" style="left:176.2px;top:301.03px;font-size:10.2px;color:#2b82a0;transform:scaleX(0.925);transform-origin:0 0">3-456-1</div>
<div class="t" style="left:262.8px;top:301.03px;font-size:10.2px;color:#2b82a0;transform:scaleX(0.925);transform-origin:0 0">4</div>
<div class="t" style="right:1014.7px;top:296.53px;font-size:10.2px;color:#2b82a0;transform:scaleX(0.925);transform-origin:100% 0">4</div>
<div class="t" style="right:926.8px;top:296.53px;font-size:10.2px;color:#2b82a0;transform:scaleX(0.925);transform-origin:100% 0">$4.00</div>
<div class="t" style="right:840.6px;top:296.53px;font-size:10.2px;color:#2b82a0;transform:scaleX(0.925);transform-origin:100% 0">$4.00</div>
<div class="t" style="right:768.6px;top:296.53px;font-size:10.2px;color:#2b82a0;transform:scaleX(0.925);transform-origin:100% 0">$12.00</div>
<div class="abs" style="left:31.2px;top:311.86px;width:636.4px;height:18.74px;background:#d3ecf3"></div>
<div class="abs" style="left:31.2px;top:330.00px;width:636.4px;height:1px;background:#b6e1ec"></div>
<div class="t" style="left:40.2px;top:319.77px;font-size:10.2px;color:#2b82a0;transform:scaleX(0.925);transform-origin:0 0">Invoice 3-456-1 Data 5</div>
<div class="t" style="left:176.2px;top:319.77px;font-size:10.2px;color:#2b82a0;transform:scaleX(0.925);transform-origin:0 0">3-456-1</div>
<div class="t" style="left:262.8px;top:319.77px;font-size:10.2px;color:#2b82a0;transform:scaleX(0.925);transform-origin:0 0">5</div>
<div class="t" style="right:1014.7px;top:315.27px;font-size:10.2px;color:#2b82a0;transform:scaleX(0.925);transform-origin:100% 0">5</div>
<div class="t" style="right:926.8px;top:315.27px;font-size:10.2px;color:#2b82a0;transform:scaleX(0.925);transform-origin:100% 0">$5.00</div>
<div class="t" style="right:840.6px;top:315.27px;font-size:10.2px;color:#2b82a0;transform:scaleX(0.925);transform-origin:100% 0">$5.00</div>
<div class="t" style="right:768.6px;top:315.27px;font-size:10.2px;color:#2b82a0;transform:scaleX(0.925);transform-origin:100% 0">$20.00</div>
<div class="abs" style="left:31.2px;top:348.74px;width:636.4px;height:1px;background:#b6e1ec"></div>
<div class="t" style="left:40.2px;top:338.51px;font-size:10.2px;color:#2b82a0;transform:scaleX(0.925);transform-origin:0 0">Invoice 3-456-1 Data 6</div>
<div class="t" style="left:176.2px;top:338.51px;font-size:10.2px;color:#2b82a0;transform:scaleX(0.925);transform-origin:0 0">3-456-1</div>
<div class="t" style="left:262.8px;top:338.51px;font-size:10.2px;color:#2b82a0;transform:scaleX(0.925);transform-origin:0 0">6</div>
<div class="t" style="right:1014.7px;top:334.01px;font-size:10.2px;color:#2b82a0;transform:scaleX(0.925);transform-origin:100% 0">6</div>
<div class="t" style="right:926.8px;top:334.01px;font-size:10.2px;color:#2b82a0;transform:scaleX(0.925);transform-origin:100% 0">$6.00</div>
<div class="t" style="right:840.6px;top:334.01px;font-size:10.2px;color:#2b82a0;transform:scaleX(0.925);transform-origin:100% 0">$6.00</div>
<div class="t" style="right:768.6px;top:334.01px;font-size:10.2px;color:#2b82a0;transform:scaleX(0.925);transform-origin:100% 0">$30.00</div>
<div class="abs" style="left:31.2px;top:349.34px;width:636.4px;height:18.74px;background:#d3ecf3"></div>
<div class="abs" style="left:31.2px;top:367.48px;width:636.4px;height:1px;background:#b6e1ec"></div>
<div class="t" style="left:40.2px;top:357.25px;font-size:10.2px;color:#2b82a0;transform:scaleX(0.925);transform-origin:0 0">Invoice 3-456-1 Data 7</div>
<div class="t" style="left:176.2px;top:357.25px;font-size:10.2px;color:#2b82a0;transform:scaleX(0.925);transform-origin:0 0">3-456-1</div>
<div class="t" style="left:262.8px;top:357.25px;font-size:10.2px;color:#2b82a0;transform:scaleX(0.925);transform-origin:0 0">7</div>
<div class="t" style="right:1014.7px;top:352.75px;font-size:10.2px;color:#2b82a0;transform:scaleX(0.925);transform-origin:100% 0">7</div>
<div class="t" style="right:926.8px;top:352.75px;font-size:10.2px;color:#2b82a0;transform:scaleX(0.925);transform-origin:100% 0">$7.00</div>
<div class="t" style="right:840.6px;top:352.75px;font-size:10.2px;color:#2b82a0;transform:scaleX(0.925);transform-origin:100% 0">$7.00</div>
<div class="t" style="right:768.6px;top:352.75px;font-size:10.2px;color:#2b82a0;transform:scaleX(0.925);transform-origin:100% 0">$42.00</div>
<div class="abs" style="left:31.2px;top:386.22px;width:636.4px;height:1px;background:#b6e1ec"></div>
<div class="t" style="left:40.2px;top:375.99px;font-size:10.2px;color:#2b82a0;transform:scaleX(0.925);transform-origin:0 0">Invoice 3-456-1 Data 8</div>
<div class="t" style="left:176.2px;top:375.99px;font-size:10.2px;color:#2b82a0;transform:scaleX(0.925);transform-origin:0 0">3-456-1</div>
<div class="t" style="left:262.8px;top:375.99px;font-size:10.2px;color:#2b82a0;transform:scaleX(0.925);transform-origin:0 0">8</div>
<div class="t" style="right:1014.7px;top:371.49px;font-size:10.2px;color:#2b82a0;transform:scaleX(0.925);transform-origin:100% 0">8</div>
<div class="t" style="right:926.8px;top:371.49px;font-size:10.2px;color:#2b82a0;transform:scaleX(0.925);transform-origin:100% 0">$8.00</div>
<div class="t" style="right:840.6px;top:371.49px;font-size:10.2px;color:#2b82a0;transform:scaleX(0.925);transform-origin:100% 0">$8.00</div>
<div class="t" style="right:768.6px;top:371.49px;font-size:10.2px;color:#2b82a0;transform:scaleX(0.925);transform-origin:100% 0">$56.00</div>
<div class="abs" style="left:31.2px;top:386.82px;width:636.4px;height:18.74px;background:#d3ecf3"></div>
<div class="abs" style="left:31.2px;top:404.96px;width:636.4px;height:1px;background:#b6e1ec"></div>
<div class="t" style="left:40.2px;top:394.73px;font-size:10.2px;color:#2b82a0;transform:scaleX(0.925);transform-origin:0 0">Invoice 3-456-1 Data 9</div>
<div class="t" style="left:176.2px;top:394.73px;font-size:10.2px;color:#2b82a0;transform:scaleX(0.925);transform-origin:0 0">3-456-1</div>
<div class="t" style="left:262.8px;top:394.73px;font-size:10.2px;color:#2b82a0;transform:scaleX(0.925);transform-origin:0 0">9</div>
<div class="t" style="right:1014.7px;top:390.23px;font-size:10.2px;color:#2b82a0;transform:scaleX(0.925);transform-origin:100% 0">9</div>
<div class="t" style="right:926.8px;top:390.23px;font-size:10.2px;color:#2b82a0;transform:scaleX(0.925);transform-origin:100% 0">$9.00</div>
<div class="t" style="right:840.6px;top:390.23px;font-size:10.2px;color:#2b82a0;transform:scaleX(0.925);transform-origin:100% 0">$9.00</div>
<div class="t" style="right:768.6px;top:390.23px;font-size:10.2px;color:#2b82a0;transform:scaleX(0.925);transform-origin:100% 0">$72.00</div>
<div class="abs" style="left:31.2px;top:423.70px;width:636.4px;height:1px;background:#b6e1ec"></div>
<div class="t" style="left:40.2px;top:413.47px;font-size:10.2px;color:#2b82a0;transform:scaleX(0.925);transform-origin:0 0">Invoice 3-456-1 Data 10</div>
<div class="t" style="left:176.2px;top:413.47px;font-size:10.2px;color:#2b82a0;transform:scaleX(0.925);transform-origin:0 0">3-456-1</div>
<div class="t" style="left:262.8px;top:413.47px;font-size:10.2px;color:#2b82a0;transform:scaleX(0.925);transform-origin:0 0">10</div>
<div class="t" style="right:1014.7px;top:408.97px;font-size:10.2px;color:#2b82a0;transform:scaleX(0.925);transform-origin:100% 0">10</div>
<div class="t" style="right:926.8px;top:408.97px;font-size:10.2px;color:#2b82a0;transform:scaleX(0.925);transform-origin:100% 0">$10.00</div>
<div class="t" style="right:840.6px;top:408.97px;font-size:10.2px;color:#2b82a0;transform:scaleX(0.925);transform-origin:100% 0">$10.00</div>
<div class="t" style="right:768.6px;top:408.97px;font-size:10.2px;color:#2b82a0;transform:scaleX(0.925);transform-origin:100% 0">$90.00</div>
<div class="abs" style="left:31.2px;top:424.30px;width:636.4px;height:18.74px;background:#d3ecf3"></div>
<div class="abs" style="left:31.2px;top:442.44px;width:636.4px;height:1px;background:#b6e1ec"></div>
<div class="t" style="left:40.2px;top:432.21px;font-size:10.2px;color:#2b82a0;transform:scaleX(0.925);transform-origin:0 0">Invoice 3-456-1 Data 11</div>
<div class="t" style="left:176.2px;top:432.21px;font-size:10.2px;color:#2b82a0;transform:scaleX(0.925);transform-origin:0 0">3-456-1</div>
<div class="t" style="left:262.8px;top:432.21px;font-size:10.2px;color:#2b82a0;transform:scaleX(0.925);transform-origin:0 0">11</div>
<div class="t" style="right:1014.7px;top:427.71px;font-size:10.2px;color:#2b82a0;transform:scaleX(0.925);transform-origin:100% 0">11</div>
<div class="t" style="right:926.8px;top:427.71px;font-size:10.2px;color:#2b82a0;transform:scaleX(0.925);transform-origin:100% 0">$11.00</div>
<div class="t" style="right:840.6px;top:427.71px;font-size:10.2px;color:#2b82a0;transform:scaleX(0.925);transform-origin:100% 0">$11.00</div>
<div class="t" style="right:768.6px;top:427.71px;font-size:10.2px;color:#2b82a0;transform:scaleX(0.925);transform-origin:100% 0">$110.00</div>
<div class="abs" style="left:31.2px;top:461.18px;width:636.4px;height:1px;background:#b6e1ec"></div>
<div class="t" style="left:40.2px;top:450.95px;font-size:10.2px;color:#2b82a0;transform:scaleX(0.925);transform-origin:0 0">Invoice 3-456-1 Data 12</div>
<div class="t" style="left:176.2px;top:450.95px;font-size:10.2px;color:#2b82a0;transform:scaleX(0.925);transform-origin:0 0">3-456-1</div>
<div class="t" style="left:262.8px;top:450.95px;font-size:10.2px;color:#2b82a0;transform:scaleX(0.925);transform-origin:0 0">12</div>
<div class="t" style="right:1014.7px;top:446.45px;font-size:10.2px;color:#2b82a0;transform:scaleX(0.925);transform-origin:100% 0">12</div>
<div class="t" style="right:926.8px;top:446.45px;font-size:10.2px;color:#2b82a0;transform:scaleX(0.925);transform-origin:100% 0">$12.00</div>
<div class="t" style="right:840.6px;top:446.45px;font-size:10.2px;color:#2b82a0;transform:scaleX(0.925);transform-origin:100% 0">$12.00</div>
<div class="t" style="right:768.6px;top:446.45px;font-size:10.2px;color:#2b82a0;transform:scaleX(0.925);transform-origin:100% 0">$132.00</div>
<div class="abs" style="left:31.2px;top:461.78px;width:636.4px;height:18.74px;background:#d3ecf3"></div>
<div class="abs" style="left:31.2px;top:479.92px;width:636.4px;height:1px;background:#b6e1ec"></div>
<div class="t" style="left:40.2px;top:469.69px;font-size:10.2px;color:#2b82a0;transform:scaleX(0.925);transform-origin:0 0">Invoice 3-456-1 Data 13</div>
<div class="t" style="left:176.2px;top:469.69px;font-size:10.2px;color:#2b82a0;transform:scaleX(0.925);transform-origin:0 0">3-456-1</div>
<div class="t" style="left:262.8px;top:469.69px;font-size:10.2px;color:#2b82a0;transform:scaleX(0.925);transform-origin:0 0">13</div>
<div class="t" style="right:1014.7px;top:465.19px;font-size:10.2px;color:#2b82a0;transform:scaleX(0.925);transform-origin:100% 0">13</div>
<div class="t" style="right:926.8px;top:465.19px;font-size:10.2px;color:#2b82a0;transform:scaleX(0.925);transform-origin:100% 0">$13.00</div>
<div class="t" style="right:840.6px;top:465.19px;font-size:10.2px;color:#2b82a0;transform:scaleX(0.925);transform-origin:100% 0">$13.00</div>
<div class="t" style="right:768.6px;top:465.19px;font-size:10.2px;color:#2b82a0;transform:scaleX(0.925);transform-origin:100% 0">$156.00</div>
<div class="abs" style="left:31.2px;top:498.66px;width:636.4px;height:1px;background:#b6e1ec"></div>
<div class="t" style="left:40.2px;top:488.43px;font-size:10.2px;color:#2b82a0;transform:scaleX(0.925);transform-origin:0 0">Invoice 3-456-1 Data 14</div>
<div class="t" style="left:176.2px;top:488.43px;font-size:10.2px;color:#2b82a0;transform:scaleX(0.925);transform-origin:0 0">3-456-1</div>
<div class="t" style="left:262.8px;top:488.43px;font-size:10.2px;color:#2b82a0;transform:scaleX(0.925);transform-origin:0 0">14</div>
<div class="t" style="right:1014.7px;top:483.93px;font-size:10.2px;color:#2b82a0;transform:scaleX(0.925);transform-origin:100% 0">14</div>
<div class="t" style="right:926.8px;top:483.93px;font-size:10.2px;color:#2b82a0;transform:scaleX(0.925);transform-origin:100% 0">$14.00</div>
<div class="t" style="right:840.6px;top:483.93px;font-size:10.2px;color:#2b82a0;transform:scaleX(0.925);transform-origin:100% 0">$14.00</div>
<div class="t" style="right:768.6px;top:483.93px;font-size:10.2px;color:#2b82a0;transform:scaleX(0.925);transform-origin:100% 0">$182.00</div>
<div class="abs" style="left:31.2px;top:499.26px;width:636.4px;height:18.74px;background:#d3ecf3"></div>
<div class="abs" style="left:31.2px;top:517.40px;width:636.4px;height:1px;background:#b6e1ec"></div>
<div class="t" style="left:40.2px;top:507.17px;font-size:10.2px;color:#2b82a0;transform:scaleX(0.925);transform-origin:0 0">Invoice 3-456-1 Data 15</div>
<div class="t" style="left:176.2px;top:507.17px;font-size:10.2px;color:#2b82a0;transform:scaleX(0.925);transform-origin:0 0">3-456-1</div>
<div class="t" style="left:262.8px;top:507.17px;font-size:10.2px;color:#2b82a0;transform:scaleX(0.925);transform-origin:0 0">15</div>
<div class="t" style="right:1014.7px;top:502.67px;font-size:10.2px;color:#2b82a0;transform:scaleX(0.925);transform-origin:100% 0">15</div>
<div class="t" style="right:926.8px;top:502.67px;font-size:10.2px;color:#2b82a0;transform:scaleX(0.925);transform-origin:100% 0">$15.00</div>
<div class="t" style="right:840.6px;top:502.67px;font-size:10.2px;color:#2b82a0;transform:scaleX(0.925);transform-origin:100% 0">$15.00</div>
<div class="t" style="right:768.6px;top:502.67px;font-size:10.2px;color:#2b82a0;transform:scaleX(0.925);transform-origin:100% 0">$210.00</div>
<div class="abs" style="left:31.2px;top:536.14px;width:636.4px;height:1px;background:#b6e1ec"></div>
<div class="t" style="left:40.2px;top:525.91px;font-size:10.2px;color:#2b82a0;transform:scaleX(0.925);transform-origin:0 0">Invoice 3-456-1 Data 16</div>
<div class="t" style="left:176.2px;top:525.91px;font-size:10.2px;color:#2b82a0;transform:scaleX(0.925);transform-origin:0 0">3-456-1</div>
<div class="t" style="left:262.8px;top:525.91px;font-size:10.2px;color:#2b82a0;transform:scaleX(0.925);transform-origin:0 0">16</div>
<div class="t" style="right:1014.7px;top:521.41px;font-size:10.2px;color:#2b82a0;transform:scaleX(0.925);transform-origin:100% 0">16</div>
<div class="t" style="right:926.8px;top:521.41px;font-size:10.2px;color:#2b82a0;transform:scaleX(0.925);transform-origin:100% 0">$16.00</div>
<div class="t" style="right:840.6px;top:521.41px;font-size:10.2px;color:#2b82a0;transform:scaleX(0.925);transform-origin:100% 0">$16.00</div>
<div class="t" style="right:768.6px;top:521.41px;font-size:10.2px;color:#2b82a0;transform:scaleX(0.925);transform-origin:100% 0">$240.00</div>
<div class="abs" style="left:31.2px;top:536.74px;width:636.4px;height:18.74px;background:#d3ecf3"></div>
<div class="abs" style="left:31.2px;top:554.88px;width:636.4px;height:1px;background:#b6e1ec"></div>
<div class="t" style="left:40.2px;top:544.65px;font-size:10.2px;color:#2b82a0;transform:scaleX(0.925);transform-origin:0 0">Invoice 3-456-1 Data 17</div>
<div class="t" style="left:176.2px;top:544.65px;font-size:10.2px;color:#2b82a0;transform:scaleX(0.925);transform-origin:0 0">3-456-1</div>
<div class="t" style="left:262.8px;top:544.65px;font-size:10.2px;color:#2b82a0;transform:scaleX(0.925);transform-origin:0 0">17</div>
<div class="t" style="right:1014.7px;top:540.15px;font-size:10.2px;color:#2b82a0;transform:scaleX(0.925);transform-origin:100% 0">17</div>
<div class="t" style="right:926.8px;top:540.15px;font-size:10.2px;color:#2b82a0;transform:scaleX(0.925);transform-origin:100% 0">$17.00</div>
<div class="t" style="right:840.6px;top:540.15px;font-size:10.2px;color:#2b82a0;transform:scaleX(0.925);transform-origin:100% 0">$17.00</div>
<div class="t" style="right:768.6px;top:540.15px;font-size:10.2px;color:#2b82a0;transform:scaleX(0.925);transform-origin:100% 0">$272.00</div>
<div class="abs" style="left:31.2px;top:573.62px;width:636.4px;height:1px;background:#b6e1ec"></div>
<div class="t" style="left:40.2px;top:563.39px;font-size:10.2px;color:#2b82a0;transform:scaleX(0.925);transform-origin:0 0">Invoice 3-456-1 Data 18</div>
<div class="t" style="left:176.2px;top:563.39px;font-size:10.2px;color:#2b82a0;transform:scaleX(0.925);transform-origin:0 0">3-456-1</div>
<div class="t" style="left:262.8px;top:563.39px;font-size:10.2px;color:#2b82a0;transform:scaleX(0.925);transform-origin:0 0">18</div>
<div class="t" style="right:1014.7px;top:558.89px;font-size:10.2px;color:#2b82a0;transform:scaleX(0.925);transform-origin:100% 0">18</div>
<div class="t" style="right:926.8px;top:558.89px;font-size:10.2px;color:#2b82a0;transform:scaleX(0.925);transform-origin:100% 0">$18.00</div>
<div class="t" style="right:840.6px;top:558.89px;font-size:10.2px;color:#2b82a0;transform:scaleX(0.925);transform-origin:100% 0">$18.00</div>
<div class="t" style="right:768.6px;top:558.89px;font-size:10.2px;color:#2b82a0;transform:scaleX(0.925);transform-origin:100% 0">$306.00</div>
<div class="abs" style="left:31.2px;top:574.22px;width:636.4px;height:18.74px;background:#d3ecf3"></div>
<div class="abs" style="left:31.2px;top:592.36px;width:636.4px;height:1px;background:#b6e1ec"></div>
<div class="t" style="left:40.2px;top:582.13px;font-size:10.2px;color:#2b82a0;transform:scaleX(0.925);transform-origin:0 0">Invoice 3-456-1 Data 19</div>
<div class="t" style="left:176.2px;top:582.13px;font-size:10.2px;color:#2b82a0;transform:scaleX(0.925);transform-origin:0 0">3-456-1</div>
<div class="t" style="left:262.8px;top:582.13px;font-size:10.2px;color:#2b82a0;transform:scaleX(0.925);transform-origin:0 0">19</div>
<div class="t" style="right:1014.7px;top:577.63px;font-size:10.2px;color:#2b82a0;transform:scaleX(0.925);transform-origin:100% 0">19</div>
<div class="t" style="right:926.8px;top:577.63px;font-size:10.2px;color:#2b82a0;transform:scaleX(0.925);transform-origin:100% 0">$19.00</div>
<div class="t" style="right:840.6px;top:577.63px;font-size:10.2px;color:#2b82a0;transform:scaleX(0.925);transform-origin:100% 0">$19.00</div>
<div class="t" style="right:768.6px;top:577.63px;font-size:10.2px;color:#2b82a0;transform:scaleX(0.925);transform-origin:100% 0">$342.00</div>
<div class="abs" style="left:31.2px;top:611.10px;width:636.4px;height:1px;background:#b6e1ec"></div>
<div class="t" style="left:40.2px;top:600.87px;font-size:10.2px;color:#2b82a0;transform:scaleX(0.925);transform-origin:0 0">Invoice 3-456-1 Data 20</div>
<div class="t" style="left:176.2px;top:600.87px;font-size:10.2px;color:#2b82a0;transform:scaleX(0.925);transform-origin:0 0">3-456-1</div>
<div class="t" style="left:262.8px;top:600.87px;font-size:10.2px;color:#2b82a0;transform:scaleX(0.925);transform-origin:0 0">20</div>
<div class="t" style="right:1014.7px;top:596.37px;font-size:10.2px;color:#2b82a0;transform:scaleX(0.925);transform-origin:100% 0">20</div>
<div class="t" style="right:926.8px;top:596.37px;font-size:10.2px;color:#2b82a0;transform:scaleX(0.925);transform-origin:100% 0">$20.00</div>
<div class="t" style="right:840.6px;top:596.37px;font-size:10.2px;color:#2b82a0;transform:scaleX(0.925);transform-origin:100% 0">$20.00</div>
<div class="t" style="right:768.6px;top:596.37px;font-size:10.2px;color:#2b82a0;transform:scaleX(0.925);transform-origin:100% 0">$380.00</div>
<div class="abs" style="left:31.2px;top:611.70px;width:636.4px;height:18.74px;background:#d3ecf3"></div>
<div class="abs" style="left:31.2px;top:629.84px;width:636.4px;height:1px;background:#b6e1ec"></div>
<div class="t" style="left:40.2px;top:619.61px;font-size:10.2px;color:#2b82a0;transform:scaleX(0.925);transform-origin:0 0">Invoice 3-456-1 Data 21</div>
<div class="t" style="left:176.2px;top:619.61px;font-size:10.2px;color:#2b82a0;transform:scaleX(0.925);transform-origin:0 0">3-456-1</div>
<div class="t" style="left:262.8px;top:619.61px;font-size:10.2px;color:#2b82a0;transform:scaleX(0.925);transform-origin:0 0">21</div>
<div class="t" style="right:1014.7px;top:615.11px;font-size:10.2px;color:#2b82a0;transform:scaleX(0.925);transform-origin:100% 0">21</div>
<div class="t" style="right:926.8px;top:615.11px;font-size:10.2px;color:#2b82a0;transform:scaleX(0.925);transform-origin:100% 0">$21.00</div>
<div class="t" style="right:840.6px;top:615.11px;font-size:10.2px;color:#2b82a0;transform:scaleX(0.925);transform-origin:100% 0">$21.00</div>
<div class="t" style="right:768.6px;top:615.11px;font-size:10.2px;color:#2b82a0;transform:scaleX(0.925);transform-origin:100% 0">$420.00</div>
<div class="abs" style="left:31.2px;top:648.58px;width:636.4px;height:1px;background:#b6e1ec"></div>
<div class="t" style="left:40.2px;top:638.35px;font-size:10.2px;color:#2b82a0;transform:scaleX(0.925);transform-origin:0 0">Invoice 3-456-1 Data 22</div>
<div class="t" style="left:176.2px;top:638.35px;font-size:10.2px;color:#2b82a0;transform:scaleX(0.925);transform-origin:0 0">3-456-1</div>
<div class="t" style="left:262.8px;top:638.35px;font-size:10.2px;color:#2b82a0;transform:scaleX(0.925);transform-origin:0 0">22</div>
<div class="t" style="right:1014.7px;top:633.85px;font-size:10.2px;color:#2b82a0;transform:scaleX(0.925);transform-origin:100% 0">22</div>
<div class="t" style="right:926.8px;top:633.85px;font-size:10.2px;color:#2b82a0;transform:scaleX(0.925);transform-origin:100% 0">$22.00</div>
<div class="t" style="right:840.6px;top:633.85px;font-size:10.2px;color:#2b82a0;transform:scaleX(0.925);transform-origin:100% 0">$22.00</div>
<div class="t" style="right:768.6px;top:633.85px;font-size:10.2px;color:#2b82a0;transform:scaleX(0.925);transform-origin:100% 0">$462.00</div>
<div class="abs" style="left:31.2px;top:649.18px;width:636.4px;height:18.74px;background:#d3ecf3"></div>
<div class="abs" style="left:31.2px;top:667.32px;width:636.4px;height:1px;background:#b6e1ec"></div>
<div class="t" style="left:40.2px;top:657.09px;font-size:10.2px;color:#2b82a0;transform:scaleX(0.925);transform-origin:0 0">Invoice 3-456-1 Data 23</div>
<div class="t" style="left:176.2px;top:657.09px;font-size:10.2px;color:#2b82a0;transform:scaleX(0.925);transform-origin:0 0">3-456-1</div>
<div class="t" style="left:262.8px;top:657.09px;font-size:10.2px;color:#2b82a0;transform:scaleX(0.925);transform-origin:0 0">23</div>
<div class="t" style="right:1014.7px;top:652.59px;font-size:10.2px;color:#2b82a0;transform:scaleX(0.925);transform-origin:100% 0">23</div>
<div class="t" style="right:926.8px;top:652.59px;font-size:10.2px;color:#2b82a0;transform:scaleX(0.925);transform-origin:100% 0">$23.00</div>
<div class="t" style="right:840.6px;top:652.59px;font-size:10.2px;color:#2b82a0;transform:scaleX(0.925);transform-origin:100% 0">$23.00</div>
<div class="t" style="right:768.6px;top:652.59px;font-size:10.2px;color:#2b82a0;transform:scaleX(0.925);transform-origin:100% 0">$506.00</div>
<div class="abs" style="left:31.2px;top:686.06px;width:636.4px;height:1px;background:#b6e1ec"></div>
<div class="t" style="left:40.2px;top:675.83px;font-size:10.2px;color:#2b82a0;transform:scaleX(0.925);transform-origin:0 0">Invoice 3-456-1 Data 24</div>
<div class="t" style="left:176.2px;top:675.83px;font-size:10.2px;color:#2b82a0;transform:scaleX(0.925);transform-origin:0 0">3-456-1</div>
<div class="t" style="left:262.8px;top:675.83px;font-size:10.2px;color:#2b82a0;transform:scaleX(0.925);transform-origin:0 0">24</div>
<div class="t" style="right:1014.7px;top:671.33px;font-size:10.2px;color:#2b82a0;transform:scaleX(0.925);transform-origin:100% 0">24</div>
<div class="t" style="right:926.8px;top:671.33px;font-size:10.2px;color:#2b82a0;transform:scaleX(0.925);transform-origin:100% 0">$24.00</div>
<div class="t" style="right:840.6px;top:671.33px;font-size:10.2px;color:#2b82a0;transform:scaleX(0.925);transform-origin:100% 0">$24.00</div>
<div class="t" style="right:768.6px;top:671.33px;font-size:10.2px;color:#2b82a0;transform:scaleX(0.925);transform-origin:100% 0">$552.00</div>
<div class="abs" style="left:31.2px;top:686.66px;width:636.4px;height:18.74px;background:#d3ecf3"></div>
<div class="abs" style="left:31.2px;top:704.80px;width:636.4px;height:1px;background:#b6e1ec"></div>
<div class="t" style="left:40.2px;top:694.57px;font-size:10.2px;color:#2b82a0;transform:scaleX(0.925);transform-origin:0 0">Invoice 3-456-1 Data 25</div>
<div class="t" style="left:168.9px;top:694.57px;font-size:10.2px;color:#2b82a0;transform:scaleX(0.925);transform-origin:0 0">3-456-1</div>
<div class="t" style="left:262.8px;top:694.57px;font-size:10.2px;color:#2b82a0;transform:scaleX(0.925);transform-origin:0 0">25</div>
<div class="t" style="right:1014.7px;top:690.07px;font-size:10.2px;color:#2b82a0;transform:scaleX(0.925);transform-origin:100% 0">25</div>
<div class="t" style="right:926.8px;top:690.07px;font-size:10.2px;color:#2b82a0;transform:scaleX(0.925);transform-origin:100% 0">$25.00</div>
<div class="t" style="right:840.6px;top:690.07px;font-size:10.2px;color:#2b82a0;transform:scaleX(0.925);transform-origin:100% 0">$25.00</div>
<div class="t" style="right:768.6px;top:690.07px;font-size:10.2px;color:#2b82a0;transform:scaleX(0.925);transform-origin:100% 0">$600.00</div>
<div class="abs" style="left:31.2px;top:723.54px;width:636.4px;height:1px;background:#b6e1ec"></div>
<div class="t" style="left:40.2px;top:713.31px;font-size:10.2px;color:#2b82a0;transform:scaleX(0.925);transform-origin:0 0">Invoice 3-456-2 Data 1</div>
<div class="t" style="left:176.2px;top:713.31px;font-size:10.2px;color:#2b82a0;transform:scaleX(0.925);transform-origin:0 0">3-456-2</div>
<div class="t" style="left:262.8px;top:713.31px;font-size:10.2px;color:#2b82a0;transform:scaleX(0.925);transform-origin:0 0">Z4567</div>
<div class="t" style="right:1014.7px;top:708.81px;font-size:10.2px;color:#2b82a0;transform:scaleX(0.925);transform-origin:100% 0">39</div>
<div class="t" style="right:926.8px;top:708.81px;font-size:10.2px;color:#2b82a0;transform:scaleX(0.925);transform-origin:100% 0">$5.00</div>
<div class="t" style="right:840.6px;top:708.81px;font-size:10.2px;color:#2b82a0;transform:scaleX(0.925);transform-origin:100% 0"></div>
<div class="t" style="right:768.6px;top:708.81px;font-size:10.2px;color:#2b82a0;transform:scaleX(0.925);transform-origin:100% 0">$195.00</div>
<div class="abs" style="left:31.2px;top:724.14px;width:636.4px;height:18.74px;background:#d3ecf3"></div>
<div class="abs" style="left:31.2px;top:742.28px;width:636.4px;height:1px;background:#b6e1ec"></div>
<div class="t" style="left:40.2px;top:732.05px;font-size:10.2px;color:#2b82a0;transform:scaleX(0.925);transform-origin:0 0">Invoice 3-456-2 Data 2</div>
<div class="t" style="left:176.2px;top:732.05px;font-size:10.2px;color:#2b82a0;transform:scaleX(0.925);transform-origin:0 0">3-456-2</div>
<div class="t" style="left:262.8px;top:732.05px;font-size:10.2px;color:#2b82a0;transform:scaleX(0.925);transform-origin:0 0">Z4568</div>
<div class="t" style="right:1014.7px;top:727.55px;font-size:10.2px;color:#2b82a0;transform:scaleX(0.925);transform-origin:100% 0">40</div>
<div class="t" style="right:926.8px;top:727.55px;font-size:10.2px;color:#2b82a0;transform:scaleX(0.925);transform-origin:100% 0">$4.00</div>
<div class="t" style="right:840.6px;top:727.55px;font-size:10.2px;color:#2b82a0;transform:scaleX(0.925);transform-origin:100% 0">$5.00</div>
<div class="t" style="right:768.6px;top:727.55px;font-size:10.2px;color:#2b82a0;transform:scaleX(0.925);transform-origin:100% 0">$155.00</div>
<div class="abs" style="left:31.2px;top:761.02px;width:636.4px;height:1px;background:#b6e1ec"></div>
<div class="t" style="left:40.2px;top:750.79px;font-size:10.2px;color:#2b82a0;transform:scaleX(0.925);transform-origin:0 0">Invoice 3-456-2 Data 3</div>
<div class="t" style="left:176.2px;top:750.79px;font-size:10.2px;color:#2b82a0;transform:scaleX(0.925);transform-origin:0 0">3-456-2</div>
<div class="t" style="left:262.8px;top:750.79px;font-size:10.2px;color:#2b82a0;transform:scaleX(0.925);transform-origin:0 0">Z4569</div>
<div class="t" style="right:1014.7px;top:746.29px;font-size:10.2px;color:#2b82a0;transform:scaleX(0.925);transform-origin:100% 0">30</div>
<div class="t" style="right:926.8px;top:746.29px;font-size:10.2px;color:#2b82a0;transform:scaleX(0.925);transform-origin:100% 0">$6.00</div>
<div class="t" style="right:840.6px;top:746.29px;font-size:10.2px;color:#2b82a0;transform:scaleX(0.925);transform-origin:100% 0">$7.00</div>
<div class="t" style="right:768.6px;top:746.29px;font-size:10.2px;color:#2b82a0;transform:scaleX(0.925);transform-origin:100% 0">$173.00</div>
<div class="abs" style="left:31.2px;top:761.62px;width:636.4px;height:18.74px;background:#d3ecf3"></div>
<div class="abs" style="left:31.2px;top:779.76px;width:636.4px;height:1px;background:#b6e1ec"></div>
<div class="t" style="left:40.2px;top:769.53px;font-size:10.2px;color:#2b82a0;transform:scaleX(0.925);transform-origin:0 0">Invoice 3-456-2 Data 4</div>
<div class="t" style="left:176.2px;top:769.53px;font-size:10.2px;color:#2b82a0;transform:scaleX(0.925);transform-origin:0 0">3-456-2</div>
<div class="t" style="left:262.8px;top:769.53px;font-size:10.2px;color:#2b82a0;transform:scaleX(0.925);transform-origin:0 0">Z4570</div>
<div class="t" style="right:1014.7px;top:765.03px;font-size:10.2px;color:#2b82a0;transform:scaleX(0.925);transform-origin:100% 0">40</div>
<div class="t" style="right:926.8px;top:765.03px;font-size:10.2px;color:#2b82a0;transform:scaleX(0.925);transform-origin:100% 0">$7.00</div>
<div class="t" style="right:840.6px;top:765.03px;font-size:10.2px;color:#2b82a0;transform:scaleX(0.925);transform-origin:100% 0"></div>
<div class="t" style="right:768.6px;top:765.03px;font-size:10.2px;color:#2b82a0;transform:scaleX(0.925);transform-origin:100% 0">$280.00</div>
<div class="abs" style="left:31.2px;top:798.50px;width:636.4px;height:1px;background:#b6e1ec"></div>
<div class="t" style="left:40.2px;top:788.27px;font-size:10.2px;color:#2b82a0;transform:scaleX(0.925);transform-origin:0 0">Invoice 3-456-2 Data 5</div>
<div class="t" style="left:176.2px;top:788.27px;font-size:10.2px;color:#2b82a0;transform:scaleX(0.925);transform-origin:0 0">3-456-2</div>
<div class="t" style="left:262.8px;top:788.27px;font-size:10.2px;color:#2b82a0;transform:scaleX(0.925);transform-origin:0 0">Z4571</div>
<div class="t" style="right:1014.7px;top:783.77px;font-size:10.2px;color:#2b82a0;transform:scaleX(0.925);transform-origin:100% 0">10</div>
<div class="t" style="right:926.8px;top:783.77px;font-size:10.2px;color:#2b82a0;transform:scaleX(0.925);transform-origin:100% 0">$4.00</div>
<div class="t" style="right:840.6px;top:783.77px;font-size:10.2px;color:#2b82a0;transform:scaleX(0.925);transform-origin:100% 0"></div>
<div class="t" style="right:768.6px;top:783.77px;font-size:10.2px;color:#2b82a0;transform:scaleX(0.925);transform-origin:100% 0">$40.00</div>
<div class="abs" style="left:31.2px;top:799.10px;width:636.4px;height:18.74px;background:#d3ecf3"></div>
<div class="abs" style="left:31.2px;top:817.24px;width:636.4px;height:1px;background:#b6e1ec"></div>
<div class="t" style="left:40.2px;top:807.01px;font-size:10.2px;color:#2b82a0;transform:scaleX(0.925);transform-origin:0 0">Invoice 3-456-2 Data 6</div>
<div class="t" style="left:176.2px;top:807.01px;font-size:10.2px;color:#2b82a0;transform:scaleX(0.925);transform-origin:0 0">3-456-2</div>
<div class="t" style="left:262.8px;top:807.01px;font-size:10.2px;color:#2b82a0;transform:scaleX(0.925);transform-origin:0 0">Z4572</div>
<div class="t" style="right:1014.7px;top:802.51px;font-size:10.2px;color:#2b82a0;transform:scaleX(0.925);transform-origin:100% 0">5</div>
<div class="t" style="right:926.8px;top:802.51px;font-size:10.2px;color:#2b82a0;transform:scaleX(0.925);transform-origin:100% 0">$8.00</div>
<div class="t" style="right:840.6px;top:802.51px;font-size:10.2px;color:#2b82a0;transform:scaleX(0.925);transform-origin:100% 0"></div>
<div class="t" style="right:768.6px;top:802.51px;font-size:10.2px;color:#2b82a0;transform:scaleX(0.925);transform-origin:100% 0">$40.00</div>
<div class="abs" style="left:31.2px;top:835.98px;width:636.4px;height:1px;background:#b6e1ec"></div>
<div class="t" style="left:40.2px;top:825.75px;font-size:10.2px;color:#2b82a0;transform:scaleX(0.925);transform-origin:0 0">Invoice 3-456-2 Data 7</div>
<div class="t" style="left:176.2px;top:825.75px;font-size:10.2px;color:#2b82a0;transform:scaleX(0.925);transform-origin:0 0">3-456-2</div>
<div class="t" style="left:262.8px;top:825.75px;font-size:10.2px;color:#2b82a0;transform:scaleX(0.925);transform-origin:0 0">Z4573</div>
<div class="t" style="right:1014.7px;top:821.25px;font-size:10.2px;color:#2b82a0;transform:scaleX(0.925);transform-origin:100% 0">70</div>
<div class="t" style="right:926.8px;top:821.25px;font-size:10.2px;color:#2b82a0;transform:scaleX(0.925);transform-origin:100% 0">$6.00</div>
<div class="t" style="right:840.6px;top:821.25px;font-size:10.2px;color:#2b82a0;transform:scaleX(0.925);transform-origin:100% 0"></div>
<div class="t" style="right:768.6px;top:821.25px;font-size:10.2px;color:#2b82a0;transform:scaleX(0.925);transform-origin:100% 0">$420.00</div>
<div class="abs" style="left:31.2px;top:836.58px;width:636.4px;height:4.42px;background:#d3ecf3"></div>
<div class="t" style="left:40.2px;top:844.49px;font-size:10.2px;color:#2b82a0;transform:scaleX(0.925);transform-origin:0 0">Invoice 3-456-2 Data 8</div>
<div class="t" style="left:176.2px;top:844.49px;font-size:10.2px;color:#2b82a0;transform:scaleX(0.925);transform-origin:0 0">3-456-2</div>
<div class="t" style="left:262.8px;top:844.49px;font-size:10.2px;color:#2b82a0;transform:scaleX(0.925);transform-origin:0 0">Z4574</div>
<div class="t" style="right:1014.7px;top:839.99px;font-size:10.2px;color:#2b82a0;transform:scaleX(0.925);transform-origin:100% 0">25</div>
<div class="t" style="right:926.8px;top:839.99px;font-size:10.2px;color:#2b82a0;transform:scaleX(0.925);transform-origin:100% 0">$4.00</div>
<div class="t" style="right:840.6px;top:839.99px;font-size:10.2px;color:#2b82a0;transform:scaleX(0.925);transform-origin:100% 0"></div>
<div class="t" style="right:768.6px;top:839.99px;font-size:10.2px;color:#2b82a0;transform:scaleX(0.925);transform-origin:100% 0">$100.00</div>
<div class="abs" style="left:165.9px;top:236.9px;width:1px;height:604px;background:#b6e1ec"></div>
<div class="abs" style="left:251.9px;top:236.9px;width:1px;height:604px;background:#b6e1ec"></div>
<div class="abs" style="left:336.5px;top:236.9px;width:1px;height:604px;background:#b6e1ec"></div>
<div class="abs" style="left:424.2px;top:236.9px;width:1px;height:604px;background:#b6e1ec"></div>
<div class="abs" style="left:508.9px;top:236.9px;width:1px;height:604px;background:#b6e1ec"></div>
<div class="abs" style="left:595.1px;top:236.9px;width:1px;height:604px;background:#b6e1ec"></div>
<div class="abs" style="left:667.1px;top:236.9px;width:1px;height:604px;background:#b6e1ec"></div>
<div class="abs" style="left:31px;top:236.9px;width:1px;height:604px;background:#b6e1ec"></div>
<div class="abs" style="left:31px;top:236.4px;width:636.6px;height:1px;background:#b6e1ec"></div>
<div class="abs" style="left:18.4px;top:154.6px;width:13.8px;height:33px;border:2px solid #217346"></div>
<div class="abs" style="left:29.6px;top:185.4px;width:4px;height:4px;background:#217346;border:0.6px solid #fff"></div>
</div>
<div class="abs" style="left:19.4px;top:142px;width:11.8px;height:13.2px;background:#d2d2d2"></div>
<div class="t" style="left:19.4px;width:11.8px;top:144.6px;text-align:center;font-size:10.3px;color:#217346">A</div>
<div class="abs" style="left:0;top:155.2px;width:19.4px;height:31.8px;background:#d2d2d2"></div>
<div class="t" style="left:0;width:19px;top:176.9px;text-align:center;font-size:10px;color:#217346">1</div>
<svg class="abs" style="left:0;top:141px" width="19" height="14"><polygon points="9,12.6 16.8,12.6 16.8,4.4" fill="#bcbcbc"/></svg>
<div class="abs" style="left:1433.6px;top:155px;width:1.6px;height:687px;background:#cdcdcd"></div>
<div class="abs" style="left:1435.6px;top:141px;width:9.4px;height:701px;background:#e6e6e6"></div>
<div class="abs" style="left:1436.4px;top:144px;width:8.6px;height:10px;background:#fff"></div>
<div class="abs" style="left:1437.8px;top:147.4px;width:0;height:0;border-left:3.2px solid transparent;border-right:3.2px solid transparent;border-bottom:3.2px solid #555"></div>
<div class="abs" style="left:1436.4px;top:155px;width:8.6px;height:606.5px;background:#fff;border-left:1px solid #c6c6c6"></div>
<div class="abs" style="left:1436.4px;top:761.5px;width:8.6px;height:69px;background:#dcdcdc"></div>
<div class="abs" style="left:1436.4px;top:830.6px;width:8.6px;height:10.5px;background:#fff"></div>
<div class="abs" style="left:1437.8px;top:834.8px;width:0;height:0;border-left:3.2px solid transparent;border-right:3.2px solid transparent;border-top:3.2px solid #555"></div>
<div class="abs" style="left:0;top:841px;width:1435px;height:1px;background:#c8c8c8"></div>
<div class="abs" style="left:0;top:842px;width:1445px;height:16.5px;background:#e6e6e6"></div>
<div class="t" style="left:15px;top:845px;font-size:10px;color:#b5b5b5">&#8249;</div>
<div class="t" style="left:32px;top:845px;font-size:10px;color:#b5b5b5">&#8250;</div>
<div class="abs" style="left:60.5px;top:842px;width:2.5px;height:15px;background:#cfcfcf"></div>
<div class="abs" style="left:63px;top:842.5px;width:160.7px;height:14.5px;background:#1a5467;"></div>
<div class="t" style="left:63px;width:160.7px;top:843.4px;text-align:center;font-size:10.3px;font-weight:normal;color:#ffffff">How to use the Invoice Tracker</div>
<div class="abs" style="left:226.2px;top:842.5px;width:45.5px;height:14.5px;background:#2a7a90;"></div>
<div class="t" style="left:226.2px;width:45.5px;top:843.4px;text-align:center;font-size:10.3px;font-weight:normal;color:#e8f4f7">Invoice</div>
<div class="abs" style="left:274.2px;top:842.5px;width:62.8px;height:14.5px;background:#30a0bf;"></div>
<div class="t" style="left:274.2px;width:62.8px;top:843.4px;text-align:center;font-size:10.3px;font-weight:normal;color:#0f4756">Customers</div>
<div class="abs" style="left:340px;top:842.5px;width:83.7px;height:14.5px;background:#7ccbe0;"></div>
<div class="t" style="left:340px;width:83.7px;top:843.4px;text-align:center;font-size:10.3px;font-weight:normal;color:#1f5564">Invoices - Main</div>
<div class="abs" style="left:425.5px;top:842.5px;width:83.9px;height:14.5px;background:#ffffff;border-bottom:2px solid #217346;"></div>
<div class="t" style="left:425.5px;width:83.9px;top:843.4px;text-align:center;font-size:10px;font-weight:bold;color:#217346">Invoice Details</div>
<div class="abs" style="left:530px;top:844.6px;width:11px;height:11px;border:1px solid #7a7a7a;border-radius:50%"></div>
<div class="abs" style="left:532.8px;top:849.6px;width:5.4px;height:1px;background:#6a6a6a"></div>
<div class="abs" style="left:535px;top:847.4px;width:1px;height:5.4px;background:#6a6a6a"></div>
<div class="t" style="left:866px;top:844px;font-size:8px;color:#999;line-height:3px;width:3px">&#183;<br>&#183;<br>&#183;</div>
<div class="abs" style="left:876px;top:844.6px;width:13px;height:10px;background:#fff"></div>
<div class="abs" style="left:881px;top:847.2px;width:0;height:0;border-top:3px solid transparent;border-bottom:3px solid transparent;border-right:3.2px solid #555"></div>
<div class="abs" style="left:889px;top:844.6px;width:511px;height:10px;background:#fff;border:1px solid #c6c6c6"></div>
<div class="abs" style="left:1400px;top:844.6px;width:20px;height:10px;background:#dcdcdc"></div>
<div class="abs" style="left:1420px;top:844.6px;width:13px;height:10px;background:#fff"></div>
<div class="abs" style="left:1427px;top:847.2px;width:0;height:0;border-top:3px solid transparent;border-bottom:3px solid transparent;border-left:3.2px solid #555"></div>
<div class="abs" style="left:0;top:858.5px;width:1445px;height:15px;background:#f1f1f1;border-top:1px solid #d9d9d9"></div>
<div class="abs" style="left:0.00px;top:873.00px;width:1445.00px;height:1.00px;background:#fbfbfb;"></div>
<div class="abs" style="left:0.00px;top:874.00px;width:1445.00px;height:1.00px;background:#3a3a3a;"></div>
<div class="t" style="left:3.0px;top:863.48px;font-size:7.7px;color:#6d6d6d;">Ready</div>
<div class="abs" style="left:1244.90px;top:858.80px;width:25.00px;height:14.60px;background:#d4d4d4;"></div>
<svg class="abs" style="left:1253px;top:862px" width="8" height="8" viewBox="0 0 8 8"><rect x="0.4" y="0.4" width="7.2" height="7.2" fill="none" stroke="#666" stroke-width="0.8"/><path d="M2.8 0.4 V7.6 M5.2 0.4 V7.6 M0.4 2.8 H7.6 M0.4 5.2 H7.6" stroke="#666" stroke-width="0.7"/></svg>
<svg class="abs" style="left:1277.3px;top:862px" width="9" height="8" viewBox="0 0 9 8"><rect x="0.4" y="0.4" width="8.2" height="7.2" fill="none" stroke="#777" stroke-width="0.8"/><rect x="2" y="1.8" width="5" height="4.4" fill="none" stroke="#999" stroke-width="0.7"/></svg>
<svg class="abs" style="left:1302.2px;top:862px" width="9" height="8" viewBox="0 0 9 8"><path d="M0.4 7.6 V0.4 H8.6 V7.6 Z M4.5 0.4 V3.8 H8.6" fill="none" stroke="#777" stroke-width="0.8"/></svg>
<div class="abs" style="left:1322.60px;top:865.80px;width:5.30px;height:1.10px;background:#555;"></div>
<div class="abs" style="left:1330.40px;top:866.00px;width:75.20px;height:0.80px;background:#b5b5b5;"></div>
<div class="abs" style="left:1366.60px;top:862.10px;width:3.30px;height:8.10px;background:#555;"></div>
<div class="abs" style="left:1407.80px;top:865.80px;width:7.50px;height:1.10px;background:#555;"></div>
<div class="abs" style="left:1411.00px;top:862.50px;width:1.10px;height:7.60px;background:#555;"></div>
<div class="t" style="left:1424.6px;top:863.31px;font-size:7.9px;color:#555;">100%</div>
</body></html>
